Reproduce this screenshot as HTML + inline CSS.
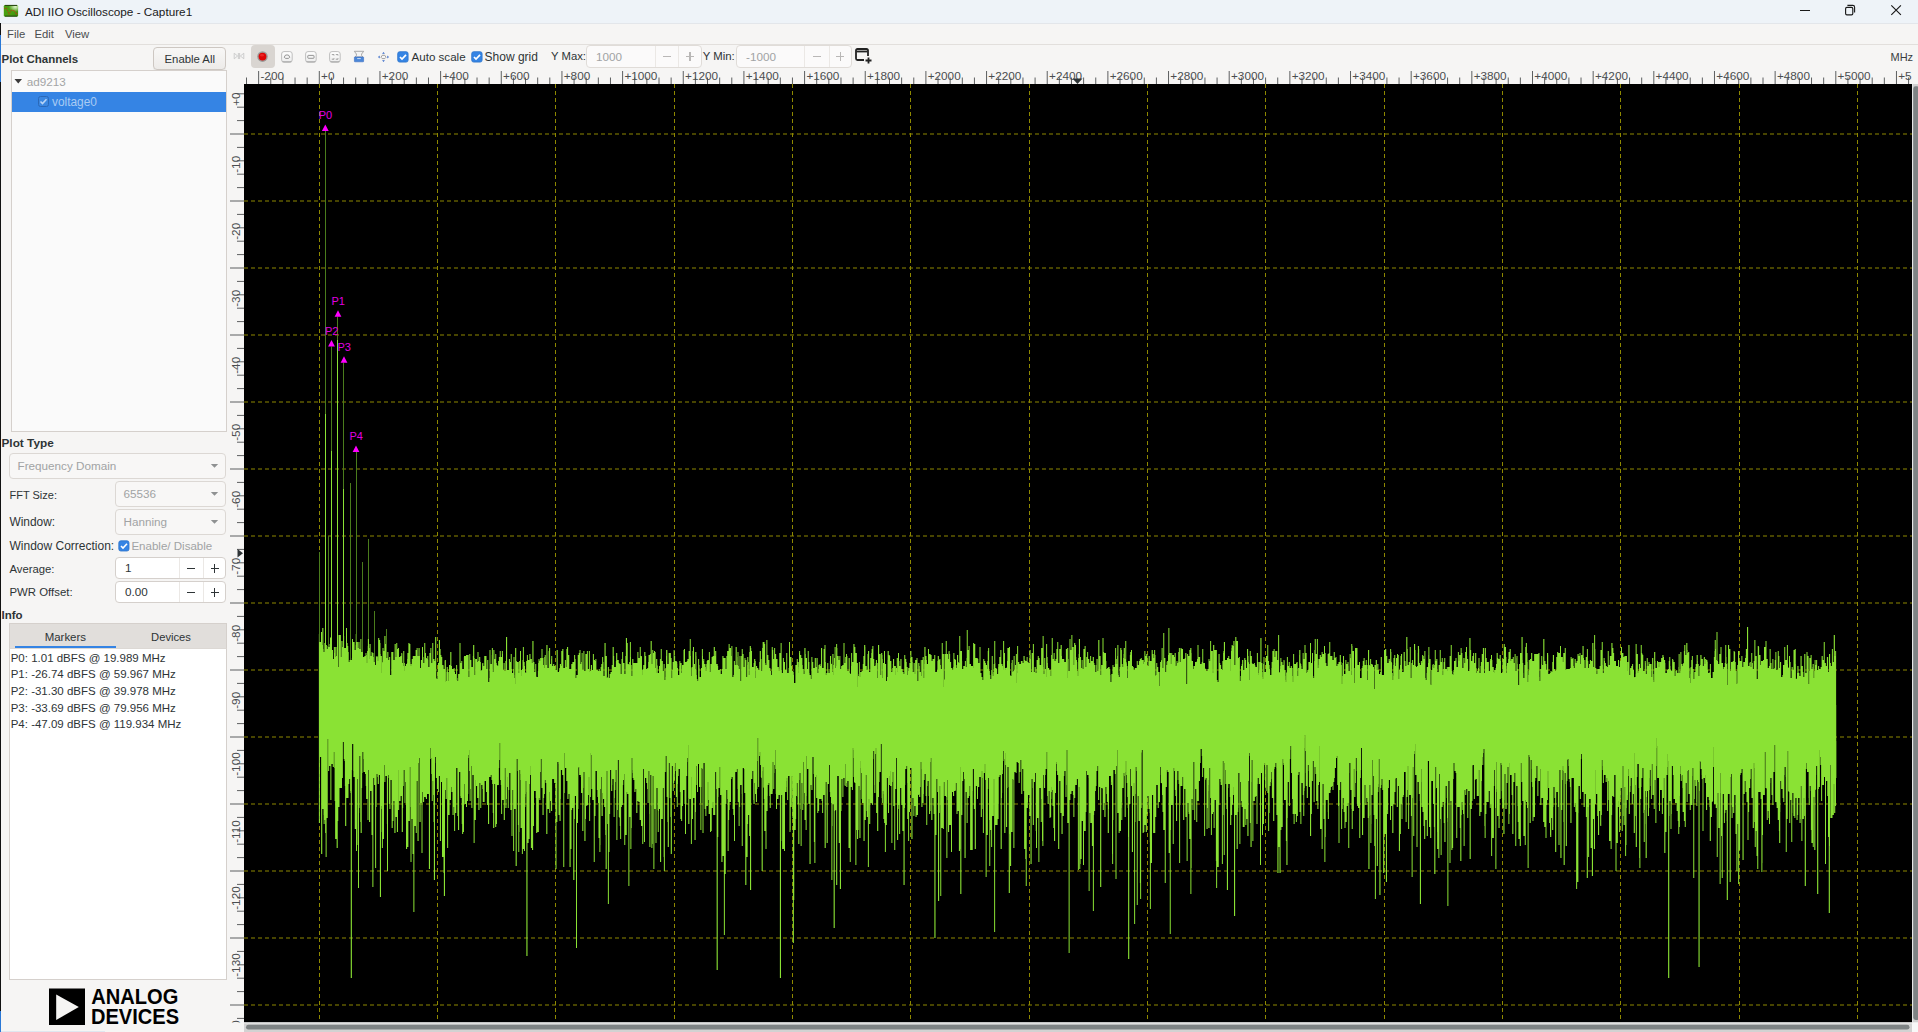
<!DOCTYPE html>
<html><head><meta charset="utf-8"><title>ADI IIO Oscilloscope - Capture1</title>
<style>
html,body{margin:0;padding:0;width:1918px;height:1032px;overflow:hidden;background:#f6f5f4}
body{position:relative;font-family:"Liberation Sans", sans-serif}
svg{display:block}
</style></head><body>
<div style="position:absolute;left:0px;top:0px;width:1918px;height:23px;background:#eef3f8"></div><div style="position:absolute;left:0px;top:23px;width:1918px;height:1px;background:#e3e6ea"></div><svg style="position:absolute;left:0;top:0" width="22" height="22" viewBox="0 0 22 22"><defs><linearGradient id="ig" x1="0" y1="0" x2="1" y2="1"><stop offset="0" stop-color="#4aa012"/><stop offset="0.6" stop-color="#48a010"/><stop offset="1" stop-color="#3a8a0c"/></linearGradient><radialGradient id="ih" cx="0.8" cy="0.15" r="0.45"><stop offset="0" stop-color="#eaf8d8" stop-opacity="0.95"/><stop offset="1" stop-color="#eaf8d8" stop-opacity="0"/></radialGradient></defs><rect x="3.8" y="5" width="14.3" height="11.6" rx="1.2" fill="url(#ig)"/><rect x="3.8" y="5" width="14.3" height="11.6" rx="1.2" fill="url(#ih)"/><rect x="5" y="4.9" width="12" height="1.1" fill="#2a4a12"/><rect x="5" y="15.6" width="12" height="1.1" fill="#2a4a12"/><path d="M4.3 8.5 L6.5 8.3 L7.6 10.6 L9 14 L11.5 10.2 L14.5 10.8 L16.3 14.3 L17.6 13.2" fill="none" stroke="#a84a10" stroke-width="1.1" stroke-dasharray="1.2 0.8"/></svg><div style="position:absolute;left:25px;top:6.05px;font-size:11.75px;line-height:11.75px;font-weight:400;color:#1a1a1a;white-space:pre;">ADI IIO Oscilloscope - Capture1</div><div style="position:absolute;left:1800px;top:9.8px;width:10px;height:1.2px;background:#1a1a1a"></div><svg style="position:absolute;left:1843px;top:3px" width="14" height="14" viewBox="0 0 14 14"><rect x="2.6" y="4.4" width="7.2" height="7.4" rx="1.3" fill="none" stroke="#1a1a1a" stroke-width="1.15"/><path d="M4.4 2.4 H9.8 Q11.6 2.4 11.6 4.2 V9.6" fill="none" stroke="#1a1a1a" stroke-width="1.1"/></svg><svg style="position:absolute;left:1889px;top:3px" width="14" height="14" viewBox="0 0 14 14"><path d="M2.3 2.3 L11.9 11.9 M11.9 2.3 L2.3 11.9" fill="none" stroke="#1a1a1a" stroke-width="1.15"/></svg><div style="position:absolute;left:0px;top:24px;width:1918px;height:1008px;background:#f6f5f4"></div><div style="position:absolute;left:0px;top:44px;width:1918px;height:1px;background:#e2dfdc"></div><div style="position:absolute;left:7px;top:29.43px;font-size:11.3px;line-height:11.3px;font-weight:400;color:#4a4d4f;white-space:pre;">File</div><div style="position:absolute;left:34.5px;top:29.43px;font-size:11.3px;line-height:11.3px;font-weight:400;color:#4a4d4f;white-space:pre;">Edit</div><div style="position:absolute;left:65px;top:29.43px;font-size:11.3px;line-height:11.3px;font-weight:400;color:#4a4d4f;white-space:pre;">View</div><div style="position:absolute;left:0px;top:23px;width:1px;height:1009px;background:#111"></div><div style="position:absolute;left:0px;top:35px;width:1px;height:47px;background:#2a78d6"></div><div style="position:absolute;left:0px;top:1011px;width:1px;height:21px;background:#2a78d6"></div><div style="position:absolute;left:1px;top:1031px;width:104px;height:1px;background:#dfe7f0"></div><div style="position:absolute;left:1.5px;top:53.77px;font-size:11.5px;line-height:11.5px;font-weight:700;color:#2e3436;white-space:pre;">Plot Channels</div><div style="position:absolute;left:153px;top:47px;width:73px;height:23px;box-sizing:border-box;border:1px solid #cdc7c2;border-radius:4px;background:linear-gradient(#f8f7f6,#edebe9);box-shadow:0 1px 0 rgba(0,0,0,0.05)"></div><div style="position:absolute;left:164.5px;top:53.89px;font-size:11.35px;line-height:11.35px;font-weight:400;color:#2e3436;white-space:pre;">Enable All</div><div style="position:absolute;left:11px;top:70px;width:216px;height:362px;box-sizing:border-box;border:1px solid #d5d0cc;background:#fafafa"></div><svg style="position:absolute;left:14px;top:78px" width="9" height="7" viewBox="0 0 9 7"><path d="M0.5 1 H8 L4.25 5.5 Z" fill="#3a3a3a"/></svg><div style="position:absolute;left:26.7px;top:76.30px;font-size:11.7px;line-height:11.7px;font-weight:400;color:#a3a5a6;white-space:pre;">ad9213</div><div style="position:absolute;left:12px;top:92px;width:214px;height:20px;background:#3584e4"></div><svg style="position:absolute;left:38px;top:96px" width="11" height="11" viewBox="0 0 11 11"><rect x="0.5" y="0.5" width="10" height="10" rx="2" fill="#3a86e0" stroke="#2a68b8" stroke-width="1"/><path d="M2.5 5.5 L4.5 7.5 L8.5 3.3" fill="none" stroke="#b8d4f6" stroke-width="1.6"/></svg><div style="position:absolute;left:52px;top:96.73px;font-size:11.9px;line-height:11.9px;font-weight:400;color:#a9cbf3;white-space:pre;">voltage0</div><div style="position:absolute;left:1.5px;top:438.01px;font-size:11.8px;line-height:11.8px;font-weight:700;color:#2e3436;white-space:pre;">Plot Type</div><div style="position:absolute;left:9px;top:453px;width:217px;height:26px;box-sizing:border-box;border:1px solid #dcd8d4;border-radius:4px;background:#f8f7f6"></div><div style="position:absolute;left:17.5px;top:460.40px;font-size:11.7px;line-height:11.7px;font-weight:400;color:#a1a3a4;white-space:pre;">Frequency Domain</div><svg style="position:absolute;left:210px;top:463.0px" width="9" height="6" viewBox="0 0 9 6"><path d="M0.8 1 H8.2 L4.5 4.8 Z" fill="#8f9192"/></svg><div style="position:absolute;left:9.5px;top:490.09px;font-size:11px;line-height:11px;font-weight:400;color:#2e3436;white-space:pre;">FFT Size:</div><div style="position:absolute;left:115px;top:481px;width:111px;height:26px;box-sizing:border-box;border:1px solid #dcd8d4;border-radius:4px;background:#f8f7f6"></div><div style="position:absolute;left:123.5px;top:488.40px;font-size:11.7px;line-height:11.7px;font-weight:400;color:#a1a3a4;white-space:pre;">65536</div><svg style="position:absolute;left:210px;top:491.0px" width="9" height="6" viewBox="0 0 9 6"><path d="M0.8 1 H8.2 L4.5 4.8 Z" fill="#8f9192"/></svg><div style="position:absolute;left:9.5px;top:516.93px;font-size:11.9px;line-height:11.9px;font-weight:400;color:#2e3436;white-space:pre;">Window:</div><div style="position:absolute;left:115px;top:509px;width:111px;height:26px;box-sizing:border-box;border:1px solid #dcd8d4;border-radius:4px;background:#f8f7f6"></div><div style="position:absolute;left:123.5px;top:516.40px;font-size:11.7px;line-height:11.7px;font-weight:400;color:#a1a3a4;white-space:pre;">Hanning</div><svg style="position:absolute;left:210px;top:519.0px" width="9" height="6" viewBox="0 0 9 6"><path d="M0.8 1 H8.2 L4.5 4.8 Z" fill="#8f9192"/></svg><div style="position:absolute;left:9.5px;top:540.14px;font-size:12px;line-height:12px;font-weight:400;color:#2e3436;white-space:pre;">Window Correction:</div><svg style="position:absolute;left:117.5px;top:539.5px" width="12" height="12" viewBox="0 0 12 12"><rect x="0.8" y="0.8" width="10.2" height="10.2" rx="2" fill="#3584e4" stroke="#2b73cc" stroke-width="0.8"/><path d="M3 6 L5 8 L9 3.8" fill="none" stroke="#fff" stroke-width="1.6"/></svg><div style="position:absolute;left:131.4px;top:540.52px;font-size:11.55px;line-height:11.55px;font-weight:400;color:#a1a3a4;white-space:pre;">Enable/ Disable</div><div style="position:absolute;left:9.5px;top:563.93px;font-size:11.3px;line-height:11.3px;font-weight:400;color:#2e3436;white-space:pre;">Average:</div><div style="position:absolute;left:115px;top:557px;width:111px;height:22px;box-sizing:border-box;border:1px solid #d5d0cc;border-radius:4px;background:#ffffff"></div><div style="position:absolute;left:179px;top:558px;width:1px;height:20px;background:#ebe8e5"></div><div style="position:absolute;left:203px;top:558px;width:1px;height:20px;background:#ebe8e5"></div><div style="position:absolute;left:125px;top:562.40px;font-size:11.7px;line-height:11.7px;font-weight:400;color:#2e3436;white-space:pre;">1</div><div style="position:absolute;left:187.0px;top:567.5px;width:8px;height:1.2px;background:#2e3436"></div><div style="position:absolute;left:210.5px;top:567.5px;width:8px;height:1.2px;background:#2e3436"></div><div style="position:absolute;left:213.9px;top:563.5px;width:1.2px;height:9px;background:#2e3436"></div><div style="position:absolute;left:9.5px;top:587.15px;font-size:11.4px;line-height:11.4px;font-weight:400;color:#2e3436;white-space:pre;">PWR Offset:</div><div style="position:absolute;left:115px;top:581px;width:111px;height:22px;box-sizing:border-box;border:1px solid #d5d0cc;border-radius:4px;background:#ffffff"></div><div style="position:absolute;left:179px;top:582px;width:1px;height:20px;background:#ebe8e5"></div><div style="position:absolute;left:203px;top:582px;width:1px;height:20px;background:#ebe8e5"></div><div style="position:absolute;left:125px;top:586.40px;font-size:11.7px;line-height:11.7px;font-weight:400;color:#2e3436;white-space:pre;">0.00</div><div style="position:absolute;left:187.0px;top:591.5px;width:8px;height:1.2px;background:#2e3436"></div><div style="position:absolute;left:210.5px;top:591.5px;width:8px;height:1.2px;background:#2e3436"></div><div style="position:absolute;left:213.9px;top:587.5px;width:1.2px;height:9px;background:#2e3436"></div><div style="position:absolute;left:1.5px;top:610.07px;font-size:11.5px;line-height:11.5px;font-weight:700;color:#2e3436;white-space:pre;">Info</div><div style="position:absolute;left:9px;top:623px;width:218px;height:26px;box-sizing:border-box;border:1px solid #d5d0cc;border-bottom:none;background:#e1dedb"></div><div style="position:absolute;left:44.7px;top:631.61px;font-size:11.45px;line-height:11.45px;font-weight:400;color:#2e3436;white-space:pre;">Markers</div><div style="position:absolute;left:151.1px;top:631.52px;font-size:11.2px;line-height:11.2px;font-weight:400;color:#2e3436;white-space:pre;">Devices</div><div style="position:absolute;left:15px;top:645.5px;width:101px;height:3px;background:#3584e4"></div><div style="position:absolute;left:9px;top:648px;width:218px;height:332px;box-sizing:border-box;border:1px solid #d5d0cc;border-top:1px solid #dcd8d4;background:#ffffff"></div><div style="position:absolute;left:10.7px;top:652.67px;font-size:11.5px;line-height:11.5px;font-weight:400;color:#2e3436;white-space:pre;">P0: 1.01 dBFS @ 19.989 MHz</div><div style="position:absolute;left:10.7px;top:669.47px;font-size:11.5px;line-height:11.5px;font-weight:400;color:#2e3436;white-space:pre;">P1: -26.74 dBFS @ 59.967 MHz</div><div style="position:absolute;left:10.7px;top:686.07px;font-size:11.5px;line-height:11.5px;font-weight:400;color:#2e3436;white-space:pre;">P2: -31.30 dBFS @ 39.978 MHz</div><div style="position:absolute;left:10.7px;top:702.77px;font-size:11.5px;line-height:11.5px;font-weight:400;color:#2e3436;white-space:pre;">P3: -33.69 dBFS @ 79.956 MHz</div><div style="position:absolute;left:10.7px;top:719.37px;font-size:11.5px;line-height:11.5px;font-weight:400;color:#2e3436;white-space:pre;">P4: -47.09 dBFS @ 119.934 MHz</div><svg style="position:absolute;left:49px;top:988px" width="132" height="38" viewBox="0 0 132 38"><rect x="0" y="0.5" width="36" height="36.5" fill="#000"/><path d="M7.2 6.4 L29.8 19 L7.2 32 Z" fill="#f6f5f4"/><text x="42.3" y="16.4" font-family="Liberation Sans" font-weight="700" font-size="22.2" textLength="87" lengthAdjust="spacingAndGlyphs" fill="#000">ANALOG</text><text x="42" y="36.3" font-family="Liberation Sans" font-weight="700" font-size="22.2" textLength="88" lengthAdjust="spacingAndGlyphs" fill="#000">DEVICES</text></svg><svg style="position:absolute;left:232px;top:50px" width="14" height="12" viewBox="0 0 14 12"><path d="M2.2 3.2 L5.6 6 L2.2 8.8 Z M11.8 3.2 L8.4 6 L11.8 8.8 Z" fill="#f4f4f4" stroke="#c8c8c8" stroke-width="0.9"/><path d="M6.4 3 V9 M7.6 3 V9" stroke="#c8c8c8" stroke-width="0.9"/></svg><div style="position:absolute;left:251px;top:45px;width:24px;height:22.5px;background:#d9d5d1;border-radius:4px"></div><svg style="position:absolute;left:256px;top:49.5px" width="13" height="13" viewBox="0 0 13 13"><circle cx="6.5" cy="6.6" r="5.3" fill="#9c9c9a"/><circle cx="6.5" cy="6.6" r="3.9" fill="#dd0606"/><ellipse cx="6" cy="5.2" rx="2" ry="1.3" fill="#ff5050" opacity="0.45"/></svg><svg style="position:absolute;left:281px;top:50.5px" width="12" height="12" viewBox="0 0 12 12"><defs><linearGradient id="rb" x1="0" y1="0" x2="0" y2="1"><stop offset="0" stop-color="#ffffff"/><stop offset="1" stop-color="#ececec"/></linearGradient></defs><rect x="0.6" y="0.6" width="10.6" height="10.6" rx="2.4" fill="url(#rb)" stroke="#b8b8b8" stroke-width="0.9"/><path d="M1.5 10.8 H10.3" stroke="#9a9a9a" stroke-width="0.8"/><path d="M3.2 6.2 L4.6 4 H7.4 L8.8 6.2 L7.4 7.4 H4.6 Z" fill="none" stroke="#8a8a8a" stroke-width="0.9"/></svg><svg style="position:absolute;left:305px;top:50.5px" width="12" height="12" viewBox="0 0 12 12"><defs><linearGradient id="rb" x1="0" y1="0" x2="0" y2="1"><stop offset="0" stop-color="#ffffff"/><stop offset="1" stop-color="#ececec"/></linearGradient></defs><rect x="0.6" y="0.6" width="10.6" height="10.6" rx="2.4" fill="url(#rb)" stroke="#b8b8b8" stroke-width="0.9"/><path d="M1.5 10.8 H10.3" stroke="#9a9a9a" stroke-width="0.8"/><rect x="2.8" y="4.4" width="6.2" height="2.9" rx="0.6" fill="none" stroke="#8a8a8a" stroke-width="0.9"/></svg><svg style="position:absolute;left:329px;top:50.5px" width="12" height="12" viewBox="0 0 12 12"><defs><linearGradient id="rb" x1="0" y1="0" x2="0" y2="1"><stop offset="0" stop-color="#ffffff"/><stop offset="1" stop-color="#ececec"/></linearGradient></defs><rect x="0.6" y="0.6" width="10.6" height="10.6" rx="2.4" fill="url(#rb)" stroke="#b8b8b8" stroke-width="0.9"/><path d="M1.5 10.8 H10.3" stroke="#9a9a9a" stroke-width="0.8"/><path d="M2.8 3.6 h2.2 v0.9 M6.8 3.6 h2.2 v0.9 M2.8 8.2 h2.2 v-0.9 M6.8 8.2 h2.2 v-0.9" fill="none" stroke="#8a8a8a" stroke-width="0.8"/></svg><svg style="position:absolute;left:353px;top:50px" width="12" height="13" viewBox="0 0 12 13"><path d="M1.3 1.3 H10.7 L8.6 4 V5.5 L10 7 H2 L3.4 5.5 V4 Z" fill="#f4f4f4" stroke="#a0a0a0" stroke-width="0.9"/><rect x="1.4" y="7" width="9.2" height="4.8" rx="0.5" fill="#4a86d8" stroke="#3a6cc0" stroke-width="0.6"/><path d="M4.2 8.6 h3.6" stroke="#d8e6f8" stroke-width="0.9"/></svg><svg style="position:absolute;left:376.5px;top:50.5px" width="13" height="12" viewBox="0 0 13 12"><path d="M6.5 1 L7.9 2.7 H5.1 Z M6.5 11 L5.1 9.3 H7.9 Z M1 6 L2.7 4.6 V7.4 Z M12 6 L10.3 7.4 V4.6 Z" fill="#3a6cc8"/><path d="M4 6.3 L5.2 4.3 H7.8 L9 6.3 L7.8 7.6 H5.2 Z" fill="#f6f6f6" stroke="#8a8a8a" stroke-width="0.8"/></svg><svg style="position:absolute;left:397px;top:50.6px" width="12" height="12" viewBox="0 0 12 12"><rect x="0.7" y="0.7" width="10.4" height="10.4" rx="2" fill="#3584e4" stroke="#2b73cc" stroke-width="0.8"/><path d="M3 6 L5 8 L9 3.8" fill="none" stroke="#fff" stroke-width="1.7"/></svg><div style="position:absolute;left:411.5px;top:50.98px;font-size:11.6px;line-height:11.6px;font-weight:400;color:#2e3436;white-space:pre;">Auto scale</div><svg style="position:absolute;left:470.5px;top:50.6px" width="12" height="12" viewBox="0 0 12 12"><rect x="0.7" y="0.7" width="10.4" height="10.4" rx="2" fill="#3584e4" stroke="#2b73cc" stroke-width="0.8"/><path d="M3 6 L5 8 L9 3.8" fill="none" stroke="#fff" stroke-width="1.7"/></svg><div style="position:absolute;left:484.6px;top:50.64px;font-size:12px;line-height:12px;font-weight:400;color:#2e3436;white-space:pre;">Show grid</div><div style="position:absolute;left:551px;top:51.23px;font-size:11.3px;line-height:11.3px;font-weight:400;color:#2e3436;white-space:pre;">Y Max:</div><div style="position:absolute;left:586px;top:45px;width:116px;height:22.5px;box-sizing:border-box;border:1px solid #e0dcd8;border-radius:4px;background:#fbfafa"></div><div style="position:absolute;left:655px;top:46px;width:1px;height:20.5px;background:#ebe8e5"></div><div style="position:absolute;left:678px;top:46px;width:1px;height:20.5px;background:#ebe8e5"></div><div style="position:absolute;left:596px;top:50.65px;font-size:11.7px;line-height:11.7px;font-weight:400;color:#a1a3a4;white-space:pre;">1000</div><div style="position:absolute;left:662.5px;top:55.75px;width:8px;height:1.2px;background:#b9b7b6"></div><div style="position:absolute;left:686.0px;top:55.75px;width:8px;height:1.2px;background:#b9b7b6"></div><div style="position:absolute;left:689.4px;top:51.75px;width:1.2px;height:9px;background:#b9b7b6"></div><div style="position:absolute;left:702.7px;top:51.15px;font-size:11.4px;line-height:11.4px;font-weight:400;color:#2e3436;white-space:pre;">Y Min:</div><div style="position:absolute;left:736px;top:45px;width:115.5px;height:22.5px;box-sizing:border-box;border:1px solid #e0dcd8;border-radius:4px;background:#fbfafa"></div><div style="position:absolute;left:804px;top:46px;width:1px;height:20.5px;background:#ebe8e5"></div><div style="position:absolute;left:829px;top:46px;width:1px;height:20.5px;background:#ebe8e5"></div><div style="position:absolute;left:746px;top:50.65px;font-size:11.7px;line-height:11.7px;font-weight:400;color:#a1a3a4;white-space:pre;">-1000</div><div style="position:absolute;left:812.5px;top:55.75px;width:8px;height:1.2px;background:#b9b7b6"></div><div style="position:absolute;left:836.25px;top:55.75px;width:8px;height:1.2px;background:#b9b7b6"></div><div style="position:absolute;left:839.65px;top:51.75px;width:1.2px;height:9px;background:#b9b7b6"></div><svg style="position:absolute;left:855px;top:47px" width="18" height="18" viewBox="0 0 18 18"><path d="M13 9 V3.5 Q13 2 11.5 2 H2.5 Q1 2 1 3.5 V11.5 Q1 13 2.5 13 H9" fill="none" stroke="#222" stroke-width="1.8"/><path d="M1.5 4.5 H12.5" stroke="#222" stroke-width="1.8"/><path d="M13.5 10.5 V16.5 M10.5 13.5 H16.5" stroke="#222" stroke-width="1.8"/></svg><div style="position:absolute;left:1890.5px;top:51.69px;font-size:11px;line-height:11px;font-weight:400;color:#3a3d3f;white-space:pre;">MHz</div><svg style="position:absolute;left:0;top:0" width="1918" height="1032" viewBox="0 0 1918 1032"><defs><clipPath id="rtop"><rect x="244" y="60" width="1668" height="25"/></clipPath><clipPath id="rleft"><rect x="224" y="84" width="20" height="938.5"/></clipPath><clipPath id="plot"><rect x="244" y="84" width="1668" height="938.5"/></clipPath></defs><g clip-path="url(#rtop)"><path d="M197.98 71V84 M210.11 77.5V84 M222.24 77.5V84 M234.38 77.5V84 M246.51 77.5V84 M258.64 71V84 M270.77 77.5V84 M282.90 77.5V84 M295.04 77.5V84 M307.17 77.5V84 M319.30 71V84 M331.43 77.5V84 M343.56 77.5V84 M355.70 77.5V84 M367.83 77.5V84 M379.96 71V84 M392.09 77.5V84 M404.22 77.5V84 M416.36 77.5V84 M428.49 77.5V84 M440.62 71V84 M452.75 77.5V84 M464.88 77.5V84 M477.02 77.5V84 M489.15 77.5V84 M501.28 71V84 M513.41 77.5V84 M525.54 77.5V84 M537.68 77.5V84 M549.81 77.5V84 M561.94 71V84 M574.07 77.5V84 M586.20 77.5V84 M598.34 77.5V84 M610.47 77.5V84 M622.60 71V84 M634.73 77.5V84 M646.86 77.5V84 M659.00 77.5V84 M671.13 77.5V84 M683.26 71V84 M695.39 77.5V84 M707.52 77.5V84 M719.66 77.5V84 M731.79 77.5V84 M743.92 71V84 M756.05 77.5V84 M768.18 77.5V84 M780.32 77.5V84 M792.45 77.5V84 M804.58 71V84 M816.71 77.5V84 M828.84 77.5V84 M840.98 77.5V84 M853.11 77.5V84 M865.24 71V84 M877.37 77.5V84 M889.50 77.5V84 M901.64 77.5V84 M913.77 77.5V84 M925.90 71V84 M938.03 77.5V84 M950.16 77.5V84 M962.30 77.5V84 M974.43 77.5V84 M986.56 71V84 M998.69 77.5V84 M1010.82 77.5V84 M1022.96 77.5V84 M1035.09 77.5V84 M1047.22 71V84 M1059.35 77.5V84 M1071.48 77.5V84 M1083.62 77.5V84 M1095.75 77.5V84 M1107.88 71V84 M1120.01 77.5V84 M1132.14 77.5V84 M1144.28 77.5V84 M1156.41 77.5V84 M1168.54 71V84 M1180.67 77.5V84 M1192.80 77.5V84 M1204.94 77.5V84 M1217.07 77.5V84 M1229.20 71V84 M1241.33 77.5V84 M1253.46 77.5V84 M1265.60 77.5V84 M1277.73 77.5V84 M1289.86 71V84 M1301.99 77.5V84 M1314.12 77.5V84 M1326.26 77.5V84 M1338.39 77.5V84 M1350.52 71V84 M1362.65 77.5V84 M1374.78 77.5V84 M1386.92 77.5V84 M1399.05 77.5V84 M1411.18 71V84 M1423.31 77.5V84 M1435.44 77.5V84 M1447.58 77.5V84 M1459.71 77.5V84 M1471.84 71V84 M1483.97 77.5V84 M1496.10 77.5V84 M1508.24 77.5V84 M1520.37 77.5V84 M1532.50 71V84 M1544.63 77.5V84 M1556.76 77.5V84 M1568.90 77.5V84 M1581.03 77.5V84 M1593.16 71V84 M1605.29 77.5V84 M1617.42 77.5V84 M1629.56 77.5V84 M1641.69 77.5V84 M1653.82 71V84 M1665.95 77.5V84 M1678.08 77.5V84 M1690.22 77.5V84 M1702.35 77.5V84 M1714.48 71V84 M1726.61 77.5V84 M1738.74 77.5V84 M1750.88 77.5V84 M1763.01 77.5V84 M1775.14 71V84 M1787.27 77.5V84 M1799.40 77.5V84 M1811.54 77.5V84 M1823.67 77.5V84 M1835.80 71V84 M1847.93 77.5V84 M1860.06 77.5V84 M1872.20 77.5V84 M1884.33 77.5V84 M1896.46 71V84 M1908.59 77.5V84 M1920.72 77.5V84 M1932.86 77.5V84 M1944.99 77.5V84 M1957.12 71V84 M1969.25 77.5V84 M1981.38 77.5V84 M1993.52 77.5V84 M2005.65 77.5V84" stroke="#5d5f60" stroke-width="1" fill="none"/><g font-family="Liberation Sans" font-size="11.75" fill="#4a4d4f"><text x="199.78" y="80.3">-400</text><text x="260.44" y="80.3">-200</text><text x="321.10" y="80.3">+0</text><text x="381.76" y="80.3">+200</text><text x="442.42" y="80.3">+400</text><text x="503.08" y="80.3">+600</text><text x="563.74" y="80.3">+800</text><text x="624.40" y="80.3">+1000</text><text x="685.06" y="80.3">+1200</text><text x="745.72" y="80.3">+1400</text><text x="806.38" y="80.3">+1600</text><text x="867.04" y="80.3">+1800</text><text x="927.70" y="80.3">+2000</text><text x="988.36" y="80.3">+2200</text><text x="1049.02" y="80.3">+2400</text><text x="1109.68" y="80.3">+2600</text><text x="1170.34" y="80.3">+2800</text><text x="1231.00" y="80.3">+3000</text><text x="1291.66" y="80.3">+3200</text><text x="1352.32" y="80.3">+3400</text><text x="1412.98" y="80.3">+3600</text><text x="1473.64" y="80.3">+3800</text><text x="1534.30" y="80.3">+4000</text><text x="1594.96" y="80.3">+4200</text><text x="1655.62" y="80.3">+4400</text><text x="1716.28" y="80.3">+4600</text><text x="1776.94" y="80.3">+4800</text><text x="1837.60" y="80.3">+5000</text><text x="1898.26" y="80.3">+5200</text><text x="1958.92" y="80.3">+5400</text></g><path d="M1072.5 78.5 H1082.5 L1077.5 84 Z" fill="#2e3436"/></g><g clip-path="url(#rleft)"><path d="M230 67.00H244 M237 80.40H244 M237 93.80H244 M237 107.20H244 M237 120.60H244 M230 134.00H244 M237 147.40H244 M237 160.80H244 M237 174.20H244 M237 187.60H244 M230 201.00H244 M237 214.40H244 M237 227.80H244 M237 241.20H244 M237 254.60H244 M230 268.00H244 M237 281.40H244 M237 294.80H244 M237 308.20H244 M237 321.60H244 M230 335.00H244 M237 348.40H244 M237 361.80H244 M237 375.20H244 M237 388.60H244 M230 402.00H244 M237 415.40H244 M237 428.80H244 M237 442.20H244 M237 455.60H244 M230 469.00H244 M237 482.40H244 M237 495.80H244 M237 509.20H244 M237 522.60H244 M230 536.00H244 M237 549.40H244 M237 562.80H244 M237 576.20H244 M237 589.60H244 M230 603.00H244 M237 616.40H244 M237 629.80H244 M237 643.20H244 M237 656.60H244 M230 670.00H244 M237 683.40H244 M237 696.80H244 M237 710.20H244 M237 723.60H244 M230 737.00H244 M237 750.40H244 M237 763.80H244 M237 777.20H244 M237 790.60H244 M230 804.00H244 M237 817.40H244 M237 830.80H244 M237 844.20H244 M237 857.60H244 M230 871.00H244 M237 884.40H244 M237 897.80H244 M237 911.20H244 M237 924.60H244 M230 938.00H244 M237 951.40H244 M237 964.80H244 M237 978.20H244 M237 991.60H244 M230 1005.00H244 M237 1018.40H244 M237 1031.80H244 M237 1045.20H244 M237 1058.60H244 M230 1072.00H244 M237 1085.40H244 M237 1098.80H244 M237 1112.20H244 M237 1125.60H244 M230 1139.00H244 M237 1152.40H244 M237 1165.80H244 M237 1179.20H244 M237 1192.60H244" stroke="#5d5f60" stroke-width="1" fill="none"/><g font-family="Liberation Sans" font-size="11.75" fill="#4a4d4f"><text transform="translate(240.3 38.80) rotate(-90)">+10</text><text transform="translate(240.3 105.80) rotate(-90)">+0</text><text transform="translate(240.3 172.80) rotate(-90)">-10</text><text transform="translate(240.3 239.80) rotate(-90)">-20</text><text transform="translate(240.3 306.80) rotate(-90)">-30</text><text transform="translate(240.3 373.80) rotate(-90)">-40</text><text transform="translate(240.3 440.80) rotate(-90)">-50</text><text transform="translate(240.3 507.80) rotate(-90)">-60</text><text transform="translate(240.3 574.80) rotate(-90)">-70</text><text transform="translate(240.3 641.80) rotate(-90)">-80</text><text transform="translate(240.3 708.80) rotate(-90)">-90</text><text transform="translate(240.3 775.80) rotate(-90)">-100</text><text transform="translate(240.3 842.80) rotate(-90)">-110</text><text transform="translate(240.3 909.80) rotate(-90)">-120</text><text transform="translate(240.3 976.80) rotate(-90)">-130</text><text transform="translate(240.3 1043.80) rotate(-90)">-140</text><text transform="translate(240.3 1110.80) rotate(-90)">-150</text></g><path d="M237.5 549 L243 553.2 L237.5 557.5 Z" fill="#2e3436"/></g><rect x="244" y="84" width="1668" height="938.5" fill="#000"/><g clip-path="url(#plot)"><path d="M319.5 84V1022.5 M437.5 84V1022.5 M555.5 84V1022.5 M674.5 84V1022.5 M792.5 84V1022.5 M910.5 84V1022.5 M1029.5 84V1022.5 M1147.5 84V1022.5 M1265.5 84V1022.5 M1384.5 84V1022.5 M1502.5 84V1022.5 M1620.5 84V1022.5 M1739.5 84V1022.5 M1857.5 84V1022.5" stroke="#8e8800" stroke-width="1" stroke-dasharray="4 3" fill="none"/><path d="M244 134.0H1912 M244 201.0H1912 M244 268.0H1912 M244 335.0H1912 M244 402.0H1912 M244 469.0H1912 M244 536.0H1912 M244 603.0H1912 M244 670.0H1912 M244 737.0H1912 M244 804.0H1912 M244 871.0H1912 M244 938.0H1912 M244 1005.0H1912" stroke="#8e8800" stroke-width="1" stroke-dasharray="4 3" fill="none"/><path d="M318.5 634V823M329.5 766V771M333.5 647V659M344.5 636V648M344.5 761V786M351.5 658V660M352.5 744V770M359.5 808V813M362.5 773V788M367.5 639V646M370.5 791V822M375.5 656V665M376.5 807V868M379.5 775V897M380.5 640V643M381.5 832V848M386.5 776V824M388.5 778V804M390.5 657V675M396.5 817V832M399.5 801V810M403.5 786V808M405.5 664V666M406.5 663V664M407.5 847V849M420.5 660V668M424.5 797V802M425.5 798V799M428.5 794V869M433.5 822V880M435.5 763V778M436.5 778V789M437.5 789V792M438.5 640V663M439.5 776V841M443.5 873V896M448.5 815V848M455.5 813V831M457.5 665V678M459.5 772V830M463.5 657V669M463.5 832V834M472.5 656V667M486.5 792V805M489.5 777V824M491.5 648V655M497.5 785V786M498.5 657V661M501.5 651V657M502.5 800V814M507.5 637V670M508.5 659V670M514.5 809V851M517.5 771V825M521.5 828V854M522.5 647V660M526.5 655V661M530.5 775V848M533.5 826V850M537.5 671V677M544.5 794V798M550.5 648V664M552.5 779V811M559.5 664V668M564.5 660V668M568.5 647V655M572.5 808V810M575.5 655V659M586.5 651V654M588.5 651V669M588.5 795V805M590.5 665V671M590.5 797V821M592.5 654V670M596.5 771V790M603.5 657V662M607.5 667V677M607.5 824V904M610.5 770V814M614.5 656V667M615.5 661V667M621.5 807V839M623.5 652V663M625.5 638V656M629.5 642V662M646.5 656V669M649.5 654V655M659.5 659V666M661.5 819V862M663.5 857V871M675.5 656V661M675.5 771V797M679.5 769V792M682.5 806V821M690.5 799V844M699.5 659V665M701.5 649V668M708.5 652V660M718.5 666V670M721.5 669V674M723.5 856V935M729.5 810V820M733.5 661V675M740.5 785V807M743.5 768V769M748.5 815V824M751.5 779V890M755.5 794V802M757.5 666V668M759.5 756V787M760.5 765V777M763.5 788V799M765.5 644V663M775.5 648V654M776.5 654V659M779.5 795V978M782.5 658V673M785.5 669V670M788.5 776V800M792.5 818V943M796.5 796V819M800.5 651V655M813.5 774V842M819.5 799V811M822.5 648V668M823.5 795V813M829.5 661V669M831.5 656V663M837.5 644V648M839.5 843V889M851.5 787V790M852.5 653V662M858.5 662V674M858.5 830V839M867.5 817V867M869.5 651V672M873.5 759V805M875.5 660V663M879.5 645V654M881.5 798V803M884.5 823V852M886.5 664V681M887.5 778V804M890.5 656V661M892.5 664V668M894.5 659V666M898.5 809V840M900.5 788V834M909.5 812V841M910.5 768V801M930.5 811V814M936.5 671V672M939.5 813V901M942.5 828V829M949.5 825V832M950.5 654V662M951.5 662V668M954.5 791V796M958.5 655V662M958.5 811V851M962.5 661V669M964.5 661V666M973.5 769V809M974.5 643V644M982.5 809V833M989.5 648V671M992.5 816V847M995.5 825V932M997.5 669V674M1002.5 774V793M1004.5 641V653M1007.5 788V827M1011.5 832V866M1015.5 654V665M1018.5 646V662M1020.5 661V664M1032.5 644V653M1045.5 775V788M1047.5 644V657M1049.5 668V670M1051.5 799V817M1055.5 793V841M1065.5 649V662M1072.5 791V795M1077.5 779V870M1078.5 639V654M1088.5 652V659M1091.5 656V661M1091.5 823V846M1092.5 846V911M1094.5 811V815M1095.5 791V811M1099.5 787V800M1104.5 652V653M1106.5 794V802M1110.5 776V785M1113.5 820V864M1114.5 664V667M1114.5 770V774M1116.5 648V659M1129.5 655V661M1131.5 786V852M1135.5 822V924M1138.5 661V665M1139.5 821V883M1141.5 808V899M1149.5 842V909M1155.5 650V655M1161.5 783V784M1166.5 661V662M1174.5 771V790M1177.5 780V821M1178.5 648V652M1180.5 805V863M1188.5 654V656M1200.5 657V664M1203.5 768V777M1205.5 780V836M1210.5 798V835M1211.5 641V651M1215.5 800V861M1217.5 867V888M1221.5 665V669M1221.5 785V864M1223.5 642V651M1226.5 809V890M1232.5 805V815M1235.5 815V916M1238.5 657V658M1246.5 660V668M1248.5 649V656M1249.5 756V823M1253.5 663V664M1256.5 653V667M1265.5 665V672M1269.5 813V831M1270.5 670V675M1271.5 783V798M1279.5 635V672M1285.5 800V841M1286.5 657V672M1288.5 782V806M1294.5 654V664M1295.5 814V822M1308.5 771V787M1311.5 814V836M1316.5 639V654M1327.5 812V819M1342.5 809V829M1356.5 771V804M1361.5 748V770M1363.5 818V835M1369.5 650V665M1371.5 659V664M1374.5 846V899M1385.5 834V882M1388.5 788V814M1391.5 649V652M1392.5 663V673M1398.5 786V851M1399.5 668V670M1402.5 654V672M1409.5 795V829M1410.5 795V816M1413.5 660V665M1415.5 644V650M1416.5 666V667M1417.5 646V653M1419.5 649V663M1419.5 801V904M1420.5 661V665M1423.5 655V656M1433.5 804V827M1453.5 779V848M1457.5 652V667M1467.5 656V659M1468.5 659V671M1471.5 650V661M1473.5 765V799M1474.5 653V663M1480.5 662V666M1482.5 648V654M1489.5 661V671M1492.5 838V856M1501.5 791V798M1525.5 643V647M1547.5 800V805M1548.5 653V655M1552.5 655V662M1557.5 792V807M1569.5 668V669M1569.5 782V787M1573.5 778V807M1577.5 882V889M1579.5 786V799M1585.5 794V817M1586.5 649V657M1589.5 660V664M1589.5 799V857M1591.5 848V876M1593.5 819V849M1595.5 635V649M1599.5 811V835M1602.5 770V783M1608.5 800V811M1609.5 656V660M1612.5 796V815M1614.5 653V661M1619.5 661V667M1620.5 816V832M1626.5 845V856M1633.5 664V670M1638.5 664V671M1641.5 787V799M1647.5 791V816M1650.5 786V799M1656.5 663V668M1661.5 790V814M1665.5 660V663M1666.5 670V673M1667.5 669V670M1672.5 766V775M1673.5 659V660M1683.5 651V663M1683.5 812V821M1691.5 656V660M1703.5 657V658M1704.5 778V783M1707.5 797V810M1708.5 670V673M1709.5 664V672M1713.5 657V672M1713.5 767V801M1718.5 662V664M1723.5 794V823M1729.5 645V649M1735.5 652V662M1739.5 651V661M1739.5 850V884M1740.5 775V850M1745.5 649V655M1748.5 627V666M1749.5 788V812M1759.5 647V655M1768.5 666V668M1778.5 820V831M1781.5 662V677M1786.5 645V660M1798.5 798V815M1810.5 791V830M1816.5 775V789M1817.5 660V670M1819.5 666V669M1822.5 785V801M1826.5 657V666M1828.5 657V671M1830.5 654V663M1831.5 649V666M1836.5 651V705" stroke="#8ae234" stroke-opacity="0.125" stroke-width="1" fill="none"/><path d="M322.5 809V854M332.5 764V767M338.5 807V821M343.5 742V759M346.5 798V826M348.5 646V652M349.5 779V784M350.5 793V978M354.5 777V829M355.5 634V645M365.5 774V786M367.5 646V651M377.5 777V784M379.5 638V640M397.5 643V649M401.5 796V832M402.5 653V654M404.5 651V663M411.5 659V664M412.5 656V659M415.5 826V833M425.5 643V653M425.5 797V798M428.5 656V660M431.5 774V801M433.5 643V659M435.5 757V763M436.5 637V678M437.5 669V672M442.5 657V665M444.5 660V661M446.5 667V670M456.5 768V813M461.5 798V824M462.5 661V669M468.5 758V794M470.5 654V660M474.5 645V658M480.5 657V662M481.5 785V808M482.5 789V802M488.5 660V682M491.5 655V664M492.5 784V813M494.5 784V828M496.5 654V663M496.5 824V827M499.5 651V657M499.5 760V768M500.5 780V785M503.5 800V820M507.5 787V808M509.5 773V790M510.5 654V662M516.5 648V661M519.5 832V852M535.5 791V798M536.5 664V676M537.5 832V833M544.5 655V657M550.5 801V813M552.5 656V666M554.5 664V666M564.5 793V867M569.5 655V669M577.5 655V675M578.5 653V655M580.5 775V777M587.5 805V806M593.5 800V862M598.5 669V671M611.5 665V672M612.5 785V791M617.5 653V660M618.5 760V817M619.5 818V826M623.5 780V785M625.5 835V845M639.5 647V658M643.5 769V844M653.5 650V653M657.5 659V665M657.5 810V832M660.5 649V659M667.5 822V847M670.5 817V854M672.5 766V791M674.5 780V783M676.5 797V807M677.5 662V664M686.5 661V662M687.5 762V776M689.5 639V651M704.5 659V664M706.5 661V664M713.5 647V656M715.5 772V815M716.5 651V664M718.5 797V837M719.5 669V670M735.5 772V802M737.5 789V802M741.5 649V656M741.5 794V846M748.5 657V662M749.5 646V652M751.5 648V651M755.5 659V661M758.5 668V670M759.5 651V662M769.5 796V808M771.5 647V675M773.5 650V659M774.5 773V789M775.5 769V794M781.5 795V841M787.5 653V673M793.5 671V672M794.5 830V900M796.5 659V665M801.5 655V658M803.5 804V810M807.5 651V669M813.5 662V668M814.5 658V668M818.5 811V813M828.5 663V671M829.5 765V792M831.5 663V664M835.5 810V811M837.5 776V885M838.5 776V843M844.5 785V786M849.5 848V862M850.5 673V674M862.5 664V671M865.5 645V647M866.5 811V817M870.5 803V824M871.5 803V804M874.5 659V666M878.5 797V831M882.5 653V655M895.5 789V850M896.5 658V668M896.5 758V789M905.5 655V659M905.5 769V785M906.5 659V662M920.5 660V672M920.5 787V797M927.5 786V825M935.5 655V672M937.5 656V661M941.5 643V669M941.5 828V896M945.5 641V654M960.5 636V651M963.5 772V781M966.5 630V658M974.5 809V849M975.5 644V658M978.5 659V663M979.5 777V787M980.5 777V817M984.5 659V661M985.5 661V663M987.5 651V661M988.5 778V789M990.5 830V866M991.5 656V670M995.5 641V663M1006.5 667V668M1008.5 787V893M1011.5 660V663M1017.5 762V763M1019.5 662V664M1022.5 769V794M1025.5 660V661M1025.5 859V886M1032.5 788V825M1035.5 773V831M1037.5 656V660M1040.5 788V822M1045.5 658V669M1051.5 638V655M1058.5 642V663M1059.5 781V849M1064.5 659V662M1068.5 648V659M1075.5 643V645M1075.5 785V798M1076.5 657V660M1077.5 662V671M1080.5 864V869M1089.5 659V663M1092.5 657V661M1101.5 788V887M1102.5 789V810M1107.5 802V833M1110.5 669V675M1122.5 788V820M1123.5 648V654M1126.5 641V662M1127.5 797V808M1129.5 804V959M1134.5 668V670M1136.5 661V668M1136.5 771V905M1139.5 659V661M1140.5 658V659M1145.5 825V832M1149.5 813V842M1155.5 817V833M1156.5 785V817M1157.5 663V667M1157.5 785V808M1158.5 667V672M1160.5 775V783M1164.5 633V658M1164.5 830V883M1169.5 853V934M1172.5 653V655M1172.5 805V844M1184.5 658V659M1184.5 789V820M1195.5 789V820M1196.5 661V662M1197.5 801V822M1201.5 662V663M1201.5 749V756M1203.5 649V663M1205.5 668V669M1206.5 669V671M1214.5 645V650M1220.5 663V665M1223.5 815V855M1228.5 784V788M1229.5 656V659M1229.5 784V797M1231.5 815V825M1238.5 808V812M1241.5 664V666M1242.5 807V827M1243.5 660V670M1249.5 651V664M1255.5 665V666M1258.5 778V784M1264.5 765V780M1268.5 645V661M1271.5 779V783M1274.5 769V821M1277.5 651V660M1288.5 662V666M1290.5 666V668M1301.5 664V666M1302.5 783V795M1304.5 791V816M1305.5 773V786M1306.5 786V798M1314.5 639V650M1319.5 655V659M1327.5 800V812M1330.5 642V656M1333.5 652V660M1334.5 778V782M1339.5 655V662M1340.5 782V790M1349.5 773V848M1351.5 809V829M1352.5 644V646M1360.5 778V838M1362.5 661V666M1365.5 660V665M1367.5 802V818M1375.5 660V665M1376.5 819V866M1380.5 657V672M1381.5 785V788M1384.5 834V873M1386.5 649V656M1387.5 656V663M1395.5 655V663M1396.5 778V807M1408.5 662V665M1409.5 647V662M1414.5 754V836M1417.5 653V666M1418.5 782V794M1419.5 794V801M1425.5 820V839M1426.5 667V673M1426.5 820V836M1431.5 781V838M1432.5 664V665M1434.5 650V665M1439.5 650V665M1441.5 658V662M1443.5 802V823M1445.5 658V669M1446.5 667V669M1446.5 786V798M1450.5 645V656M1452.5 671V674M1457.5 807V838M1459.5 807V828M1466.5 789V795M1468.5 791V818M1476.5 653V668M1476.5 779V796M1481.5 654V662M1483.5 753V765M1484.5 648V673M1489.5 791V808M1498.5 658V659M1503.5 644V659M1512.5 657V659M1516.5 786V846M1517.5 806V822M1518.5 669V685M1519.5 839V846M1523.5 663V673M1524.5 836V845M1528.5 660V671M1532.5 653V661M1535.5 778V781M1542.5 656V665M1548.5 655V674M1549.5 673V674M1551.5 818V837M1553.5 807V830M1556.5 792V852M1558.5 652V653M1562.5 780V810M1564.5 648V653M1565.5 784V846M1568.5 766V779M1581.5 754V759M1585.5 657V660M1586.5 817V878M1588.5 661V668M1596.5 668V669M1601.5 642V650M1601.5 815V826M1607.5 651V667M1609.5 660V665M1614.5 775V797M1620.5 660V661M1620.5 799V816M1621.5 788V831M1628.5 776V814M1631.5 778V804M1633.5 794V833M1635.5 816V847M1638.5 764V788M1640.5 645V668M1642.5 653V654M1643.5 655V671M1643.5 813V842M1644.5 661V671M1646.5 658V666M1649.5 790V808M1653.5 658V674M1653.5 795V809M1655.5 652V661M1668.5 661V669M1669.5 816V978M1670.5 657V666M1677.5 670V673M1677.5 811V821M1679.5 827V834M1680.5 774V781M1684.5 821V827M1689.5 652V668M1689.5 794V810M1694.5 799V878M1695.5 664V667M1701.5 775V779M1703.5 658V666M1706.5 659V660M1708.5 797V800M1709.5 807V841M1714.5 640V651M1715.5 804V808M1716.5 808V857M1721.5 836V878M1724.5 663V667M1726.5 645V657M1726.5 821V900M1727.5 663V664M1732.5 661V662M1734.5 795V813M1745.5 655V658M1749.5 662V663M1750.5 779V788M1752.5 653V663M1752.5 798V828M1753.5 661V669M1754.5 822V847M1757.5 646V679M1758.5 792V869M1766.5 789V820M1770.5 783V800M1774.5 660V668M1777.5 651V670M1777.5 808V820M1780.5 812V843M1785.5 647V660M1785.5 777V852M1790.5 800V823M1792.5 813V842M1794.5 649V650M1796.5 678V679M1804.5 816V886M1808.5 798V805M1812.5 843V847M1816.5 766V775M1818.5 789V894M1823.5 642V660M1828.5 671V672M1828.5 837V913M1833.5 635V662M1835.5 806V813M1836.5 705V741" stroke="#8ae234" stroke-opacity="0.250" stroke-width="1" fill="none"/><path d="M323.5 628V649M323.5 815V824M325.5 643V645M325.5 833V857M327.5 646V649M331.5 764V800M334.5 768V801M336.5 839V848M355.5 645V650M360.5 822V833M361.5 639V652M373.5 778V887M381.5 809V832M385.5 776V782M388.5 652V660M391.5 780V828M393.5 652V660M394.5 644V660M402.5 654V663M408.5 821V847M410.5 644V662M414.5 826V912M415.5 650V656M416.5 648V650M423.5 657V663M428.5 660V667M431.5 648V663M441.5 655V657M444.5 661V669M445.5 790V799M446.5 670V672M451.5 652V666M453.5 668V669M469.5 771V801M471.5 660V667M472.5 775V808M473.5 775V843M483.5 663V666M494.5 650V659M503.5 663V670M515.5 809V866M525.5 797V807M534.5 662V672M536.5 676V677M540.5 772V800M543.5 658V665M547.5 809V834M548.5 651V668M556.5 650V670M557.5 762V822M563.5 649V668M574.5 819V880M578.5 768V809M581.5 653V662M583.5 788V831M584.5 651V671M596.5 659V670M600.5 667V671M600.5 845V852M605.5 835V869M609.5 674V678M612.5 647V665M612.5 779V785M613.5 779V817M615.5 782V790M617.5 810V840M629.5 817V886M631.5 828V849M632.5 773V778M633.5 659V663M637.5 801V813M638.5 652V658M639.5 802V820M642.5 669V670M645.5 652V656M647.5 789V803M650.5 641V654M650.5 775V847M652.5 844V848M654.5 809V869M663.5 664V671M663.5 788V857M666.5 772V797M667.5 650V664M668.5 653V664M669.5 763V798M672.5 662V670M673.5 650V662M677.5 664V668M680.5 661V663M686.5 776V804M688.5 651V659M689.5 799V824M691.5 667V668M696.5 652V656M701.5 787V830M704.5 763V809M706.5 806V816M708.5 800V814M711.5 657V664M712.5 656V657M716.5 789V970M726.5 790V804M727.5 799V851M728.5 644V651M732.5 646V677M732.5 777V809M735.5 647V665M738.5 802V826M741.5 785V794M746.5 660V677M746.5 857V885M752.5 771V779M753.5 663V667M757.5 761V789M761.5 778V871M762.5 642V648M767.5 640V655M768.5 655V660M769.5 660V668M770.5 668V671M780.5 643V653M788.5 668V673M797.5 797V804M799.5 780V844M800.5 809V846M802.5 658V665M805.5 820V830M809.5 662V673M812.5 657V662M815.5 777V863M823.5 649V668M824.5 795V848M826.5 810V843M832.5 826V880M833.5 804V928M834.5 647V658M837.5 648V656M840.5 656V669M843.5 778V797M847.5 656V671M847.5 781V787M848.5 658V671M855.5 647V653M856.5 830V865M858.5 674V676M861.5 671V672M865.5 647V666M871.5 649V653M873.5 646V659M873.5 751V759M875.5 663V665M875.5 754V793M881.5 744V798M887.5 651V660M891.5 661V672M892.5 782V843M899.5 661V666M911.5 651V657M913.5 663V672M914.5 806V816M919.5 663V666M922.5 657V660M925.5 774V796M928.5 781V796M932.5 798V820M933.5 806V814M940.5 659V665M947.5 800V858M948.5 651V652M952.5 668V670M954.5 653V659M955.5 659V660M961.5 815V894M962.5 781V815M966.5 792V823M968.5 646V650M985.5 780V877M990.5 675V679M993.5 664V672M995.5 663V668M1000.5 775V849M1001.5 650V664M1005.5 765V833M1013.5 656V671M1014.5 772V848M1015.5 772V773M1018.5 763V783M1026.5 657V661M1031.5 653V672M1034.5 667V672M1036.5 660V669M1039.5 788V862M1042.5 636V648M1043.5 775V846M1047.5 796V804M1051.5 792V799M1053.5 653V659M1056.5 764V771M1060.5 645V649M1064.5 771V776M1068.5 823V953M1070.5 794V800M1072.5 635V647M1074.5 798V817M1078.5 654V658M1081.5 660V668M1084.5 646V649M1086.5 771V812M1088.5 778V891M1094.5 663V665M1095.5 665V672M1099.5 640V656M1106.5 661V669M1113.5 770V820M1118.5 645V673M1118.5 813V833M1119.5 667V677M1121.5 648V650M1124.5 776V817M1126.5 775V783M1130.5 769V804M1142.5 750V833M1144.5 825V832M1145.5 651V656M1147.5 654V666M1148.5 656V661M1151.5 650V661M1160.5 767V775M1161.5 648V660M1165.5 658V672M1166.5 662V665M1168.5 772V853M1169.5 628V653M1174.5 653V657M1177.5 771V780M1178.5 780V784M1186.5 653V684M1186.5 817V861M1188.5 812V814M1191.5 648V653M1191.5 868V894M1201.5 663V664M1213.5 812V828M1219.5 779V805M1220.5 782V785M1231.5 645V648M1236.5 637V641M1236.5 815V849M1238.5 773V808M1240.5 782V844M1241.5 801V807M1245.5 658V660M1246.5 819V825M1252.5 663V664M1253.5 801V841M1255.5 666V667M1262.5 663V672M1265.5 787V791M1271.5 662V668M1273.5 649V651M1281.5 658V662M1281.5 827V830M1290.5 750V759M1292.5 799V814M1293.5 814V824M1300.5 650V663M1301.5 783V824M1302.5 653V669M1305.5 751V773M1308.5 765V771M1313.5 676V678M1313.5 761V802M1318.5 785V809M1321.5 652V657M1321.5 829V849M1325.5 837V862M1326.5 663V666M1327.5 654V666M1328.5 653V654M1332.5 656V660M1341.5 662V665M1343.5 798V812M1346.5 660V664M1349.5 654V671M1349.5 763V773M1355.5 783V797M1356.5 758V771M1361.5 668V678M1363.5 658V661M1366.5 798V805M1371.5 824V843M1373.5 776V815M1378.5 664V670M1378.5 787V792M1388.5 659V663M1391.5 652V662M1393.5 804V833M1395.5 663V666M1403.5 652V672M1405.5 772V822M1407.5 637V649M1411.5 816V877M1425.5 651V678M1429.5 647V659M1435.5 789V874M1437.5 659V672M1438.5 665V672M1439.5 774V858M1440.5 819V855M1443.5 662V669M1448.5 781V906M1449.5 656V667M1452.5 848V850M1455.5 771V773M1460.5 648V655M1461.5 815V861M1462.5 653V668M1463.5 814V846M1469.5 791V859M1480.5 812V816M1484.5 826V838M1486.5 802V814M1492.5 660V667M1494.5 770V786M1496.5 653V664M1496.5 792V869M1499.5 655V659M1501.5 765V791M1506.5 657V666M1509.5 649V652M1509.5 814V824M1511.5 775V795M1513.5 782V834M1514.5 654V663M1523.5 673V678M1527.5 808V868M1529.5 757V823M1531.5 769V782M1538.5 781V796M1541.5 798V805M1544.5 639V661M1546.5 664V670M1555.5 670V671M1563.5 822V865M1567.5 760V781M1569.5 779V782M1570.5 657V668M1574.5 659V668M1578.5 813V882M1583.5 792V807M1590.5 799V848M1593.5 643V667M1595.5 649V668M1599.5 666V669M1603.5 658V673M1605.5 775V782M1610.5 841V849M1613.5 648V653M1623.5 653V657M1623.5 816V825M1635.5 644V674M1637.5 764V777M1640.5 799V868M1645.5 824V858M1646.5 666V674M1650.5 770V786M1656.5 766V823M1665.5 663V673M1665.5 832V853M1671.5 670V671M1676.5 803V811M1678.5 654V667M1681.5 652V664M1682.5 788V812M1685.5 645V655M1686.5 783V802M1687.5 643V650M1690.5 667V668M1696.5 655V664M1697.5 780V806M1700.5 762V769M1701.5 769V775M1707.5 660V661M1712.5 672V678M1719.5 828V884M1725.5 810V813M1726.5 810V821M1727.5 664V669M1729.5 794V882M1730.5 649V671M1731.5 774V818M1733.5 651V661M1742.5 656V667M1755.5 640V656M1760.5 792V799M1762.5 863V872M1769.5 649V666M1770.5 778V783M1773.5 659V669M1773.5 772V805M1776.5 652V670M1776.5 805V808M1779.5 656V668M1780.5 781V812M1782.5 789V798M1784.5 775V802M1785.5 767V777M1788.5 667V668M1788.5 791V792M1791.5 667V678M1792.5 793V813M1795.5 798V818M1799.5 673V676M1802.5 819V841M1803.5 672V677M1805.5 654V673M1808.5 772V798M1810.5 655V658M1810.5 786V791M1812.5 664V667M1814.5 660V671M1815.5 790V850M1820.5 667V669M1821.5 656V667M1836.5 741V778" stroke="#8ae234" stroke-opacity="0.375" stroke-width="1" fill="none"/><path d="M323.5 809V815M329.5 644V647M330.5 637V638M331.5 637V650M336.5 647V656M338.5 635V667M339.5 788V807M342.5 641V647M348.5 784V798M349.5 660V662M357.5 779V845M359.5 642V649M359.5 756V808M362.5 752V773M363.5 759V772M365.5 653V656M366.5 653V655M367.5 799V820M368.5 770V820M369.5 644V648M371.5 652V656M371.5 791V835M372.5 652V653M373.5 653V657M377.5 656V657M380.5 643V654M382.5 648V662M383.5 648V651M385.5 636V644M386.5 644V658M388.5 775V778M390.5 780V809M393.5 801V821M395.5 817V833M404.5 770V803M405.5 782V803M409.5 643V644M410.5 662V664M410.5 807V862M411.5 819V862M412.5 819V854M417.5 781V841M418.5 648V656M419.5 758V822M421.5 803V853M422.5 792V853M433.5 795V822M434.5 659V661M443.5 665V666M443.5 857V873M452.5 792V815M457.5 678V681M459.5 643V674M460.5 643V663M460.5 796V798M477.5 652V662M478.5 652V661M479.5 783V810M486.5 656V669M489.5 650V678M490.5 650V664M491.5 775V780M497.5 665V666M506.5 799V808M511.5 810V836M512.5 790V836M513.5 657V669M514.5 657V675M517.5 759V771M519.5 770V832M520.5 780V828M522.5 660V669M525.5 672V673M525.5 794V797M527.5 843V956M530.5 654V659M533.5 641V662M538.5 659V663M539.5 659V660M541.5 649V658M541.5 759V788M542.5 649V658M542.5 788V815M545.5 780V783M547.5 645V668M555.5 806V869M556.5 822V869M558.5 764V815M559.5 815V821M568.5 794V799M569.5 794V867M571.5 810V849M579.5 650V653M580.5 650V664M585.5 819V841M595.5 771V816M598.5 803V838M600.5 789V845M601.5 777V816M603.5 662V676M604.5 643V676M609.5 814V852M610.5 672V674M619.5 663V664M621.5 659V674M624.5 663V674M635.5 789V792M648.5 655V662M655.5 809V843M656.5 788V843M657.5 665V666M657.5 788V810M666.5 756V772M683.5 650V665M684.5 790V804M687.5 758V762M692.5 651V667M694.5 798V840M696.5 656V670M697.5 679V681M699.5 665V668M702.5 769V833M703.5 763V833M705.5 664V667M718.5 788V797M722.5 856V862M723.5 656V658M737.5 652V657M737.5 769V789M738.5 652V666M739.5 656V669M740.5 656V681M744.5 658V667M745.5 658V660M753.5 800V804M761.5 659V671M763.5 787V788M764.5 642V644M765.5 663V665M765.5 831V849M766.5 811V849M774.5 765V773M777.5 659V667M778.5 795V799M789.5 776V832M790.5 830V832M791.5 657V666M797.5 783V797M804.5 793V820M805.5 648V654M809.5 804V864M812.5 757V790M813.5 757V774M816.5 658V667M818.5 665V669M819.5 664V665M820.5 664V666M821.5 799V801M824.5 645V649M825.5 645V662M826.5 782V810M829.5 669V673M833.5 654V665M841.5 779V811M843.5 643V665M844.5 643V663M844.5 778V785M848.5 781V848M853.5 758V777M854.5 644V647M854.5 782V783M860.5 790V838M861.5 773V799M863.5 803V841M867.5 654V670M879.5 772V782M882.5 655V659M887.5 660V677M901.5 659V669M903.5 831V885M906.5 766V769M912.5 657V662M912.5 798V839M915.5 806V817M916.5 658V660M917.5 658V681M922.5 803V807M925.5 647V656M926.5 656V660M932.5 659V661M933.5 798V806M935.5 835V938M936.5 779V835M944.5 654V679M948.5 652V659M956.5 665V668M956.5 783V814M957.5 811V814M964.5 779V858M966.5 658V667M979.5 647V663M980.5 647V673M981.5 673V677M982.5 677V680M996.5 668V669M1002.5 664V666M1003.5 751V761M1007.5 767V788M1008.5 767V787M1010.5 675V676M1020.5 760V772M1023.5 656V663M1028.5 662V663M1029.5 650V663M1030.5 816V864M1032.5 779V788M1049.5 791V818M1050.5 817V818M1052.5 790V806M1055.5 659V661M1061.5 813V834M1065.5 771V797M1066.5 785V797M1069.5 639V671M1070.5 639V650M1071.5 791V794M1088.5 775V778M1096.5 659V665M1096.5 771V786M1097.5 766V771M1102.5 638V665M1102.5 788V789M1103.5 638V652M1105.5 787V817M1110.5 675V682M1112.5 665V674M1113.5 665V667M1115.5 774V879M1116.5 766V879M1118.5 673V675M1123.5 654V658M1127.5 666V678M1135.5 794V822M1138.5 796V821M1147.5 796V814M1148.5 796V809M1149.5 809V813M1155.5 655V675M1162.5 795V812M1176.5 661V665M1177.5 661V663M1180.5 648V662M1180.5 786V805M1182.5 777V786M1192.5 799V810M1193.5 666V669M1193.5 762V810M1197.5 645V659M1198.5 645V657M1205.5 779V780M1206.5 778V829M1208.5 659V669M1209.5 659V661M1209.5 768V828M1218.5 654V682M1234.5 641V665M1240.5 676V681M1248.5 656V662M1248.5 781V836M1249.5 753V756M1250.5 823V847M1256.5 796V824M1257.5 784V824M1261.5 638V663M1263.5 657V664M1264.5 657V672M1271.5 772V779M1275.5 763V767M1278.5 847V873M1279.5 847V873M1282.5 662V665M1283.5 660V665M1284.5 660V661M1286.5 672V673M1287.5 818V865M1290.5 746V750M1296.5 662V663M1299.5 772V812M1301.5 666V669M1304.5 645V659M1304.5 788V791M1305.5 645V653M1323.5 784V819M1330.5 790V793M1332.5 786V790M1333.5 782V790M1335.5 657V658M1336.5 657V666M1338.5 662V664M1338.5 806V843M1339.5 790V843M1342.5 663V676M1344.5 812V828M1345.5 822V828M1347.5 662V664M1348.5 662V666M1351.5 790V809M1352.5 646V651M1357.5 648V665M1367.5 665V680M1369.5 816V869M1371.5 795V824M1372.5 664V665M1374.5 665V689M1380.5 788V895M1393.5 658V665M1394.5 792V804M1395.5 779V792M1400.5 656V665M1401.5 804V819M1402.5 797V819M1403.5 795V797M1405.5 661V666M1407.5 790V797M1415.5 650V666M1416.5 775V847M1417.5 782V847M1422.5 807V812M1423.5 812V826M1426.5 673V680M1435.5 767V789M1445.5 803V842M1449.5 781V863M1450.5 801V863M1453.5 670V672M1455.5 658V660M1456.5 658V667M1464.5 658V663M1470.5 638V650M1472.5 766V801M1475.5 779V780M1478.5 658V668M1479.5 658V673M1480.5 666V673M1495.5 668V670M1498.5 816V828M1502.5 659V673M1504.5 800V834M1508.5 652V659M1514.5 773V782M1516.5 656V658M1517.5 656V664M1517.5 786V806M1521.5 637V653M1527.5 653V662M1531.5 760V769M1532.5 787V821M1533.5 817V821M1536.5 766V778M1539.5 653V677M1545.5 661V664M1545.5 827V838M1546.5 805V838M1550.5 671V673M1553.5 787V807M1554.5 787V798M1558.5 807V845M1559.5 770V845M1561.5 810V858M1565.5 773V784M1571.5 778V823M1573.5 658V666M1576.5 661V663M1577.5 654V661M1578.5 786V813M1579.5 653V656M1580.5 653V664M1582.5 646V655M1585.5 660V668M1600.5 650V666M1602.5 766V770M1612.5 643V648M1615.5 775V871M1616.5 843V871M1626.5 808V845M1629.5 645V675M1630.5 786V792M1635.5 674V677M1641.5 778V787M1642.5 768V778M1645.5 791V824M1648.5 662V666M1649.5 662V664M1655.5 661V668M1663.5 655V657M1666.5 775V832M1669.5 801V816M1670.5 666V669M1670.5 801V829M1671.5 814V829M1673.5 660V662M1673.5 775V799M1682.5 664V666M1688.5 770V794M1692.5 776V805M1698.5 782V967M1701.5 655V659M1702.5 779V831M1703.5 778V831M1707.5 661V662M1709.5 672V673M1714.5 651V657M1716.5 632V660M1717.5 632V661M1720.5 647V654M1721.5 647V663M1723.5 667V669M1726.5 657V664M1735.5 795V834M1737.5 824V871M1742.5 769V860M1745.5 781V792M1746.5 792V802M1747.5 802V840M1748.5 812V840M1751.5 769V798M1756.5 831V856M1760.5 655V665M1762.5 835V863M1765.5 641V647M1766.5 641V659M1766.5 788V789M1768.5 811V818M1771.5 663V669M1771.5 778V795M1776.5 802V805M1793.5 650V670M1796.5 798V820M1798.5 666V672M1799.5 798V823M1800.5 656V676M1806.5 652V673M1807.5 652V656M1832.5 815V818" stroke="#8ae234" stroke-opacity="0.500" stroke-width="1" fill="none"/><path d="M323.5 649V652M324.5 643V652M324.5 820V824M326.5 818V857M328.5 646V647M330.5 766V800M341.5 641V657M344.5 759V761M347.5 643V646M350.5 791V793M353.5 771V777M354.5 642V650M358.5 642V648M360.5 639V649M364.5 656V657M370.5 644V656M372.5 835V887M376.5 656V657M376.5 774V807M377.5 774V777M384.5 636V651M384.5 765V782M389.5 804V809M394.5 801V833M400.5 796V801M407.5 653V659M408.5 643V653M413.5 854V912M417.5 648V656M418.5 763V841M419.5 648V656M420.5 803V822M429.5 653V667M430.5 648V653M430.5 748V759M436.5 678V679M437.5 672V679M440.5 649V655M443.5 666V669M446.5 672V681M449.5 800V815M451.5 787V792M453.5 807V815M454.5 668V672M457.5 768V816M464.5 784V804M468.5 655V677M468.5 755V758M470.5 789V801M471.5 766V808M474.5 658V675M474.5 820V843M478.5 798V810M482.5 785V789M484.5 781V802M493.5 650V672M504.5 663V671M505.5 661V671M505.5 768V808M510.5 773V810M514.5 675V678M524.5 662V666M526.5 792V956M528.5 839V843M529.5 654V660M529.5 784V839M532.5 641V663M539.5 660V661M539.5 798V800M543.5 798V815M546.5 645V665M555.5 666V670M555.5 783V806M558.5 762V764M560.5 799V821M566.5 649V667M567.5 781V799M570.5 849V867M572.5 662V664M575.5 659V678M578.5 767V768M582.5 653V670M583.5 651V670M583.5 772V788M584.5 772V841M585.5 654V671M591.5 755V789M595.5 659V661M597.5 790V797M599.5 838V852M605.5 643V656M607.5 677V678M614.5 798V817M616.5 770V840M619.5 817V818M625.5 656V674M628.5 794V886M630.5 817V849M631.5 665V676M632.5 770V773M633.5 778V780M634.5 780V792M637.5 652V663M638.5 801V802M648.5 771V803M649.5 814V847M651.5 806V848M653.5 776V869M655.5 652V668M664.5 664V680M665.5 668V677M667.5 797V822M670.5 798V817M671.5 658V678M674.5 650V656M675.5 763V771M678.5 769V776M679.5 661V666M680.5 792V819M681.5 663V673M687.5 659V661M691.5 668V676M695.5 812V840M696.5 670V675M696.5 766V785M699.5 668V677M700.5 803V830M701.5 768V787M705.5 809V816M710.5 664V672M721.5 795V862M722.5 656V669M725.5 658V669M726.5 656V669M728.5 820V851M729.5 644V648M729.5 802V810M731.5 646V656M731.5 777V779M733.5 675V677M737.5 657V665M739.5 807V826M743.5 654V667M747.5 824V857M754.5 783V804M766.5 640V665M767.5 796V811M768.5 783V785M772.5 791V794M781.5 643V670M786.5 787V792M792.5 805V818M795.5 665V683M799.5 773V780M800.5 773V809M801.5 783V846M803.5 762V804M804.5 648V674M806.5 796V830M808.5 769V804M809.5 673V675M810.5 785V864M811.5 657V679M811.5 785V790M814.5 842V863M817.5 658V673M828.5 671V673M831.5 803V880M832.5 654V672M832.5 804V826M835.5 647V668M838.5 656V660M839.5 656V660M842.5 779V797M853.5 644V662M855.5 783V865M858.5 786V830M859.5 786V838M863.5 656V664M864.5 820V841M866.5 775V811M872.5 646V649M875.5 665V666M877.5 663V678M880.5 654V675M883.5 794V819M891.5 786V843M898.5 805V809M900.5 659V666M902.5 669V672M902.5 805V831M903.5 672V674M904.5 808V885M907.5 667V675M909.5 663V668M910.5 651V663M911.5 768V839M913.5 798V816M916.5 815V817M921.5 769V807M923.5 794V803M924.5 647V660M924.5 774V780M927.5 781V786M930.5 654V655M930.5 762V811M931.5 655V661M934.5 814V938M937.5 661V670M939.5 659V660M944.5 782V796M946.5 797V858M947.5 780V800M949.5 651V654M953.5 653V667M955.5 790V791M965.5 792V858M967.5 798V823M969.5 646V664M969.5 786V796M982.5 778V809M986.5 835V877M997.5 819V825M998.5 804V819M999.5 775V777M1000.5 650V657M1007.5 648V661M1011.5 663V676M1012.5 779V832M1013.5 780V848M1014.5 656V670M1016.5 762V773M1019.5 772V783M1022.5 661V663M1024.5 656V660M1027.5 657V662M1029.5 795V816M1030.5 650V655M1031.5 779V864M1036.5 669V673M1038.5 818V862M1039.5 658V665M1042.5 841V846M1043.5 636V667M1045.5 769V775M1047.5 657V663M1053.5 806V828M1054.5 653V661M1056.5 649V659M1060.5 781V813M1062.5 816V834M1068.5 659V671M1069.5 800V953M1071.5 635V650M1073.5 795V817M1080.5 859V864M1081.5 821V859M1082.5 660V668M1083.5 649V669M1085.5 646V667M1089.5 813V891M1097.5 659V671M1100.5 656V675M1104.5 803V817M1106.5 787V794M1109.5 667V669M1111.5 674V682M1117.5 645V656M1119.5 831V833M1122.5 664V667M1126.5 662V663M1136.5 767V771M1141.5 753V808M1144.5 651V662M1148.5 661V666M1153.5 654V658M1159.5 672V686M1162.5 648V668M1167.5 770V772M1168.5 628V655M1175.5 790V796M1176.5 665V666M1178.5 771V780M1181.5 648V649M1185.5 789V817M1187.5 803V861M1188.5 803V812M1189.5 650V656M1190.5 839V894M1191.5 653V660M1191.5 799V868M1200.5 749V763M1207.5 669V671M1207.5 808V829M1208.5 791V828M1214.5 800V828M1217.5 680V682M1219.5 654V663M1220.5 779V782M1222.5 661V670M1223.5 651V653M1223.5 761V815M1225.5 770V784M1226.5 800V809M1231.5 648V651M1233.5 641V646M1239.5 773V844M1244.5 809V827M1245.5 809V825M1247.5 819V836M1251.5 782V847M1252.5 760V841M1258.5 662V673M1260.5 638V662M1266.5 765V791M1267.5 765V793M1269.5 665V669M1269.5 786V813M1270.5 782V786M1271.5 668V675M1272.5 651V662M1274.5 649V657M1274.5 767V769M1276.5 768V815M1277.5 815V873M1280.5 658V666M1280.5 830V873M1283.5 763V765M1284.5 661V670M1285.5 670V676M1286.5 841V865M1292.5 668V676M1294.5 814V824M1297.5 662V676M1298.5 772V775M1300.5 812V824M1303.5 653V659M1306.5 653V673M1307.5 670V672M1308.5 662V670M1314.5 650V661M1314.5 767V802M1315.5 767V774M1317.5 801V809M1318.5 659V665M1322.5 652V654M1322.5 784V849M1324.5 819V862M1325.5 653V663M1337.5 664V666M1345.5 660V674M1348.5 666V671M1350.5 654V658M1350.5 763V790M1354.5 668V683M1362.5 666V668M1364.5 658V665M1364.5 785V818M1365.5 785V805M1368.5 818V869M1369.5 785V816M1370.5 815V843M1372.5 760V795M1379.5 759V895M1381.5 779V785M1382.5 779V790M1406.5 797V822M1411.5 663V678M1412.5 798V877M1421.5 782V807M1424.5 651V659M1428.5 647V655M1430.5 659V684M1438.5 849V858M1441.5 807V855M1442.5 802V807M1444.5 823V842M1445.5 786V803M1447.5 822V906M1451.5 801V850M1453.5 763V779M1454.5 763V771M1455.5 660V661M1461.5 648V653M1462.5 802V810M1463.5 658V668M1464.5 790V846M1469.5 638V671M1472.5 765V766M1476.5 668V673M1481.5 781V812M1483.5 749V753M1484.5 749V826M1485.5 814V838M1495.5 808V869M1496.5 789V792M1499.5 819V828M1500.5 763V799M1503.5 808V834M1504.5 774V800M1505.5 774V809M1506.5 666V673M1506.5 783V809M1507.5 767V783M1508.5 767V824M1515.5 654V671M1516.5 658V671M1518.5 822V839M1521.5 763V782M1522.5 637V660M1523.5 801V836M1524.5 665V678M1528.5 671V675M1528.5 755V868M1537.5 766V796M1538.5 653V654M1539.5 677V681M1551.5 671V672M1560.5 770V858M1562.5 770V780M1563.5 771V822M1568.5 759V766M1570.5 787V823M1571.5 657V659M1572.5 658V659M1575.5 803V812M1578.5 654V656M1583.5 646V658M1584.5 660V668M1596.5 669V674M1602.5 760V766M1604.5 658V661M1608.5 781V800M1611.5 643V656M1611.5 815V849M1624.5 656V657M1628.5 645V662M1636.5 644V654M1639.5 858V868M1642.5 654V655M1643.5 768V813M1651.5 664V677M1652.5 764V795M1653.5 674V680M1655.5 780V823M1662.5 655V658M1667.5 767V775M1675.5 671V676M1678.5 667V673M1679.5 654V673M1680.5 652V671M1682.5 775V788M1687.5 650V653M1687.5 771V802M1689.5 668V678M1690.5 668V674M1692.5 768V776M1693.5 669V679M1695.5 667V672M1696.5 802V806M1698.5 664V676M1699.5 791V967M1700.5 655V665M1709.5 803V807M1712.5 801V802M1720.5 793V884M1727.5 669V685M1732.5 807V818M1734.5 651V652M1736.5 834V871M1740.5 773V775M1741.5 656V661M1741.5 769V773M1743.5 794V860M1749.5 663V666M1754.5 640V661M1761.5 799V872M1765.5 752V788M1770.5 649V663M1772.5 659V669M1772.5 795V805M1774.5 745V772M1775.5 652V660M1782.5 675V677M1784.5 767V775M1790.5 662V678M1793.5 793V816M1794.5 816V818M1797.5 666V673M1797.5 815V820M1798.5 672V673M1800.5 819V823M1801.5 656V666M1801.5 786V841M1806.5 763V769M1808.5 656V684M1809.5 658V671M1811.5 655V669M1811.5 830V843M1812.5 667V669M1815.5 660V665M1820.5 757V765M1830.5 765V818" stroke="#8ae234" stroke-opacity="0.625" stroke-width="1" fill="none"/><path d="M322.5 628V645M327.5 739V818M334.5 752V768M335.5 647V657M337.5 656V663M337.5 821V848M348.5 652V662M353.5 744V771M356.5 634V642M360.5 756V822M361.5 788V833M363.5 752V759M380.5 654V656M381.5 806V809M387.5 652V658M391.5 652V675M392.5 821V828M395.5 644V657M396.5 643V657M400.5 656V657M401.5 653V656M403.5 651V666M403.5 770V786M410.5 767V807M416.5 781V833M424.5 643V663M427.5 656V659M431.5 758V774M432.5 643V663M432.5 781V801M446.5 778V799M447.5 667V671M448.5 672V681M450.5 652V665M460.5 772V796M461.5 661V663M469.5 654V677M480.5 783V808M481.5 670V671M482.5 663V664M484.5 656V666M487.5 660V669M489.5 678V682M490.5 775V777M495.5 654V659M496.5 663V665M499.5 743V760M500.5 651V657M508.5 790V808M511.5 654V669M516.5 759V866M518.5 662V673M518.5 825V852M520.5 774V780M525.5 781V794M526.5 781V792M535.5 664V672M544.5 657V668M545.5 655V665M546.5 783V834M549.5 792V813M551.5 656V659M557.5 650V672M559.5 668V671M561.5 651V666M562.5 649V651M563.5 775V867M564.5 753V793M566.5 768V781M571.5 664V669M573.5 808V880M576.5 675V678M582.5 793V831M586.5 805V806M592.5 789V800M594.5 816V862M599.5 669V671M601.5 664V667M602.5 793V816M605.5 830V835M606.5 771V869M607.5 771V824M613.5 647V656M615.5 770V782M618.5 660V663M620.5 664V674M624.5 774V845M626.5 792V835M627.5 643V664M631.5 758V828M632.5 659V676M632.5 758V770M636.5 789V813M640.5 647V656M642.5 826V844M643.5 665V669M644.5 652V665M646.5 778V783M647.5 668V669M649.5 771V814M651.5 641V664M651.5 775V806M652.5 650V664M652.5 776V844M657.5 666V673M658.5 811V832M661.5 649V661M665.5 677V680M665.5 756V772M673.5 783V791M676.5 661V662M677.5 784V807M679.5 666V675M688.5 798V824M690.5 639V656M695.5 652V669M703.5 659V661M706.5 664V671M707.5 660V661M711.5 808V831M717.5 664V666M717.5 837V970M719.5 767V788M720.5 669V674M725.5 804V874M727.5 790V799M733.5 809V815M736.5 647V665M742.5 649V654M742.5 768V846M744.5 769V793M745.5 793V885M747.5 657V665M749.5 652V675M753.5 771V800M755.5 661V678M757.5 738V761M759.5 662V670M762.5 771V871M763.5 767V787M764.5 799V831M767.5 785V796M769.5 783V796M770.5 794V808M772.5 647V650M772.5 762V791M773.5 762V789M775.5 750V769M779.5 653V671M786.5 653V670M786.5 781V787M790.5 807V830M791.5 798V807M792.5 790V805M793.5 672V675M795.5 819V830M797.5 659V662M798.5 662V667M798.5 804V844M802.5 665V669M802.5 783V810M803.5 669V674M805.5 654V658M806.5 756V796M808.5 651V662M817.5 798V813M818.5 669V673M825.5 782V848M826.5 673V675M827.5 663V673M827.5 784V843M834.5 811V928M842.5 665V666M845.5 657V663M845.5 764V786M846.5 783V787M849.5 658V673M850.5 787V862M853.5 750V758M860.5 768V790M866.5 666V670M870.5 658V672M871.5 653V658M874.5 785V793M882.5 659V678M883.5 791V794M888.5 651V655M889.5 655V656M892.5 668V672M892.5 772V782M893.5 772V806M894.5 806V850M901.5 788V805M904.5 655V674M906.5 662V667M907.5 783V819M908.5 668V671M912.5 662V672M914.5 663V672M918.5 663V681M919.5 666V672M920.5 762V787M921.5 660V676M921.5 762V769M923.5 657V678M924.5 660V664M926.5 796V825M931.5 758V820M934.5 655V659M937.5 779V792M939.5 786V813M940.5 805V896M942.5 643V654M944.5 679V680M946.5 641V654M958.5 662V663M959.5 636V663M960.5 849V894M963.5 666V669M967.5 630V650M972.5 791V850M977.5 658V659M983.5 659V680M987.5 661V669M989.5 820V866M991.5 670V679M992.5 656V674M993.5 672V676M994.5 641V664M998.5 664V667M998.5 777V804M999.5 657V664M1001.5 798V849M1004.5 759V833M1012.5 660V672M1021.5 760V794M1023.5 769V791M1025.5 849V859M1026.5 808V886M1030.5 655V659M1035.5 667V673M1038.5 656V658M1041.5 799V822M1043.5 667V674M1044.5 658V674M1046.5 752V769M1048.5 791V804M1050.5 670V676M1052.5 638V659M1056.5 762V764M1057.5 642V649M1059.5 649V663M1061.5 645V656M1066.5 750V785M1067.5 750V823M1073.5 647V665M1079.5 787V869M1082.5 668V669M1085.5 812V831M1086.5 657V667M1090.5 813V823M1096.5 665V672M1098.5 640V671M1116.5 659V664M1117.5 750V813M1120.5 648V667M1121.5 808V820M1123.5 773V788M1124.5 773V776M1125.5 641V659M1125.5 772V817M1126.5 663V664M1127.5 783V797M1130.5 652V655M1133.5 667V670M1135.5 767V794M1137.5 661V665M1137.5 796V905M1141.5 658V660M1141.5 752V753M1143.5 660V664M1143.5 832V833M1146.5 654V656M1149.5 656V661M1152.5 650V654M1155.5 675V676M1156.5 663V675M1158.5 802V808M1163.5 633V668M1163.5 812V830M1165.5 787V883M1170.5 830V934M1171.5 653V664M1173.5 768V844M1175.5 653V666M1178.5 652V662M1185.5 653V658M1189.5 814V839M1190.5 648V650M1191.5 660V661M1194.5 762V820M1196.5 789V822M1202.5 649V662M1205.5 778V779M1208.5 785V791M1218.5 805V867M1224.5 763V855M1226.5 784V800M1228.5 656V658M1232.5 645V646M1232.5 804V805M1235.5 637V665M1237.5 812V849M1244.5 658V670M1249.5 664V680M1250.5 651V656M1251.5 760V782M1255.5 796V797M1257.5 778V784M1262.5 672V677M1264.5 763V765M1267.5 645V656M1275.5 651V657M1276.5 763V768M1279.5 672V673M1282.5 759V827M1285.5 676V680M1287.5 782V818M1289.5 662V668M1299.5 650V655M1300.5 663V664M1303.5 795V816M1304.5 748V788M1315.5 639V654M1318.5 665V668M1325.5 800V837M1329.5 642V653M1334.5 652V658M1337.5 756V785M1342.5 798V809M1346.5 806V822M1348.5 803V848M1351.5 644V675M1352.5 811V829M1354.5 769V797M1359.5 808V838M1366.5 660V665M1367.5 798V802M1370.5 785V815M1374.5 815V846M1377.5 664V670M1378.5 784V787M1389.5 659V661M1392.5 673V680M1392.5 806V833M1393.5 665V676M1394.5 655V658M1395.5 778V779M1398.5 655V679M1404.5 652V661M1406.5 637V666M1407.5 649V665M1410.5 647V678M1413.5 767V836M1414.5 751V754M1421.5 769V782M1423.5 656V659M1425.5 678V680M1428.5 655V663M1430.5 684V685M1431.5 670V685M1432.5 665V667M1433.5 664V668M1434.5 827V874M1435.5 650V661M1436.5 659V661M1440.5 650V662M1442.5 658V675M1444.5 658V662M1447.5 818V822M1451.5 645V671M1453.5 672V675M1456.5 773V838M1460.5 828V861M1461.5 802V815M1465.5 790V795M1467.5 789V818M1470.5 809V859M1472.5 656V661M1479.5 770V816M1482.5 757V765M1486.5 658V662M1488.5 791V802M1490.5 804V808M1493.5 667V672M1496.5 762V789M1497.5 653V658M1499.5 799V819M1500.5 655V661M1501.5 763V765M1504.5 644V647M1510.5 649V661M1512.5 795V834M1513.5 657V663M1515.5 773V846M1517.5 664V669M1522.5 660V663M1522.5 782V801M1525.5 647V665M1525.5 800V845M1527.5 662V682M1529.5 755V757M1530.5 760V823M1540.5 669V681M1540.5 769V805M1541.5 656V664M1543.5 639V657M1544.5 822V827M1552.5 662V672M1556.5 657V670M1563.5 653V662M1564.5 773V865M1565.5 648V670M1567.5 759V760M1575.5 659V663M1584.5 794V807M1592.5 643V661M1597.5 669V674M1597.5 794V816M1600.5 825V826M1602.5 642V665M1606.5 778V782M1608.5 651V665M1613.5 796V797M1620.5 788V799M1622.5 766V831M1623.5 766V816M1624.5 787V825M1626.5 800V808M1628.5 769V776M1630.5 778V786M1631.5 666V668M1635.5 785V816M1641.5 645V653M1644.5 810V842M1645.5 661V663M1646.5 797V858M1647.5 658V666M1649.5 778V790M1653.5 680V682M1654.5 780V809M1656.5 748V766M1664.5 778V853M1669.5 657V661M1670.5 669V670M1671.5 804V814M1674.5 662V676M1676.5 670V671M1678.5 821V834M1680.5 766V774M1681.5 776V781M1683.5 663V664M1684.5 645V651M1685.5 783V827M1686.5 643V655M1690.5 674V683M1690.5 805V810M1691.5 660V667M1693.5 768V878M1694.5 672V679M1694.5 780V799M1695.5 780V786M1696.5 786V802M1697.5 655V661M1699.5 666V676M1700.5 761V762M1707.5 662V670M1709.5 800V803M1715.5 640V649M1717.5 793V857M1718.5 793V828M1719.5 654V664M1720.5 773V793M1722.5 794V878M1725.5 645V663M1730.5 777V882M1735.5 662V671M1736.5 671V684M1737.5 665V683M1743.5 662V667M1744.5 781V794M1750.5 662V667M1750.5 769V779M1751.5 653V667M1754.5 768V822M1755.5 831V847M1756.5 656V679M1757.5 856V869M1767.5 659V668M1767.5 811V820M1774.5 668V669M1778.5 651V656M1783.5 798V802M1784.5 647V665M1786.5 819V852M1787.5 751V819M1789.5 792V823M1791.5 800V842M1792.5 667V670M1795.5 649V664M1804.5 654V677M1809.5 786V805M1813.5 664V678M1813.5 797V847M1814.5 797V850M1822.5 656V660M1824.5 642V663M1827.5 781V796" stroke="#8ae234" stroke-opacity="0.750" stroke-width="1" fill="none"/><path d="M319.5 634V642M319.5 757V823M321.5 757V854M325.5 820V833M326.5 645V649M328.5 739V771M333.5 752V767M334.5 647V653M335.5 801V839M340.5 635V657M342.5 742V778M343.5 636V647M345.5 786V826M350.5 779V791M351.5 770V978M357.5 642V648M366.5 655V663M366.5 786V799M367.5 651V663M369.5 648V659M373.5 657V662M374.5 656V662M374.5 778V785M375.5 785V868M377.5 657V661M378.5 638V661M378.5 775V784M381.5 656V673M382.5 662V663M382.5 839V848M389.5 657V660M398.5 770V810M402.5 808V832M404.5 663V671M407.5 659V663M409.5 767V821M410.5 664V666M411.5 664V666M426.5 658V659M433.5 781V795M435.5 637V661M438.5 776V792M445.5 660V682M447.5 671V672M447.5 778V848M454.5 807V831M456.5 665V680M458.5 674V681M462.5 824V834M469.5 750V771M473.5 645V656M475.5 659V675M475.5 780V820M477.5 786V798M479.5 657V661M480.5 662V671M482.5 664V670M492.5 648V672M492.5 780V784M493.5 813V828M495.5 784V827M498.5 661V666M498.5 768V785M500.5 743V780M501.5 785V814M502.5 651V654M504.5 768V820M507.5 777V787M513.5 669V673M513.5 790V851M515.5 648V684M516.5 661V662M519.5 661V673M520.5 770V774M521.5 670V676M522.5 849V854M523.5 647V662M526.5 661V673M527.5 655V660M530.5 766V775M531.5 659V663M536.5 798V833M538.5 663V671M538.5 798V832M540.5 658V661M540.5 759V772M544.5 780V794M551.5 659V664M553.5 664V666M554.5 779V783M560.5 770V799M562.5 770V775M565.5 660V667M574.5 655V662M574.5 796V819M579.5 767V775M581.5 662V664M587.5 651V669M588.5 777V795M589.5 651V672M589.5 777V821M590.5 753V797M593.5 654V660M597.5 670V671M602.5 657V664M604.5 799V807M605.5 807V830M606.5 656V678M608.5 667V678M608.5 852V904M611.5 770V791M614.5 790V798M616.5 653V661M617.5 760V810M620.5 826V839M621.5 805V807M622.5 652V659M622.5 785V805M627.5 792V794M628.5 664V665M629.5 662V665M630.5 642V657M641.5 656V657M642.5 670V675M647.5 783V789M648.5 662V668M656.5 659V673M662.5 661V671M662.5 788V819M664.5 772V871M666.5 650V656M668.5 763V847M670.5 653V658M671.5 766V854M672.5 670V678M674.5 763V780M681.5 819V821M688.5 745V798M691.5 777V844M696.5 675V679M698.5 659V681M700.5 787V803M702.5 649V656M702.5 768V769M705.5 667V671M707.5 782V806M708.5 782V800M709.5 652V672M712.5 802V808M713.5 802V815M714.5 647V656M715.5 651V656M716.5 772V789M720.5 767V795M724.5 874V935M727.5 651V656M734.5 661V665M736.5 769V772M738.5 666V669M741.5 656V681M747.5 665V677M748.5 662V675M749.5 815V836M750.5 646V648M754.5 659V663M758.5 738V787M759.5 752V756M760.5 651V659M760.5 752V765M761.5 777V778M762.5 648V671M762.5 767V771M774.5 648V659M778.5 667V671M781.5 670V673M782.5 795V849M783.5 658V662M786.5 778V781M787.5 778V800M791.5 776V798M792.5 776V790M793.5 900V943M796.5 783V796M798.5 667V673M799.5 651V653M810.5 675V679M815.5 658V667M816.5 775V798M822.5 801V813M825.5 662V675M830.5 792V797M833.5 665V675M836.5 644V666M836.5 810V885M841.5 666V669M851.5 653V666M852.5 748V790M853.5 748V750M856.5 653V663M857.5 663V687M859.5 662V677M860.5 672V677M860.5 761V768M864.5 645V656M865.5 775V820M868.5 799V867M869.5 799V824M872.5 804V805M874.5 751V785M875.5 748V754M876.5 748V813M877.5 813V831M880.5 744V772M881.5 653V675M882.5 791V803M884.5 819V823M885.5 825V852M886.5 778V825M889.5 776V785M890.5 771V786M895.5 666V675M897.5 658V672M899.5 805V834M907.5 766V783M908.5 819V841M914.5 672V674M915.5 660V674M918.5 794V795M919.5 794V797M923.5 780V794M924.5 664V678M926.5 660V664M930.5 758V762M938.5 656V660M940.5 665V669M940.5 786V805M943.5 654V687M943.5 782V829M953.5 667V670M955.5 783V790M960.5 767V849M965.5 661V667M968.5 796V798M970.5 786V850M972.5 769V791M973.5 643V668M975.5 786V849M981.5 771V817M982.5 771V778M983.5 773V833M984.5 764V773M985.5 663V665M985.5 764V780M987.5 789V835M988.5 648V651M989.5 671V675M991.5 830V847M992.5 674V676M993.5 779V816M994.5 779V932M998.5 667V674M1002.5 770V774M1003.5 641V670M1005.5 668V670M1005.5 753V765M1009.5 834V893M1013.5 671V672M1013.5 779V780M1016.5 654V683M1017.5 646V673M1024.5 791V849M1027.5 802V808M1033.5 644V672M1033.5 782V825M1041.5 648V665M1046.5 644V677M1047.5 663V666M1047.5 752V796M1051.5 655V676M1051.5 787V792M1057.5 771V775M1058.5 775V849M1063.5 776V816M1067.5 648V678M1074.5 643V665M1076.5 779V785M1077.5 671V676M1078.5 658V676M1078.5 787V870M1087.5 652V657M1090.5 656V663M1093.5 657V663M1093.5 815V911M1095.5 786V791M1098.5 766V800M1100.5 787V887M1101.5 665V675M1103.5 803V810M1107.5 668V669M1108.5 667V668M1108.5 809V833M1111.5 782V785M1112.5 854V864M1115.5 648V664M1117.5 656V664M1118.5 675V677M1121.5 650V664M1121.5 802V808M1123.5 658V667M1124.5 648V659M1125.5 761V772M1126.5 664V666M1126.5 761V775M1128.5 837V959M1133.5 783V796M1134.5 783V924M1140.5 883V899M1141.5 750V752M1146.5 814V832M1150.5 863V909M1153.5 795V833M1154.5 650V658M1160.5 662V667M1161.5 660V661M1166.5 665V672M1166.5 770V787M1167.5 661V665M1170.5 653V664M1174.5 768V771M1178.5 662V663M1179.5 648V662M1179.5 784V863M1183.5 777V820M1187.5 654V684M1198.5 781V801M1202.5 756V777M1204.5 768V836M1208.5 780V785M1210.5 641V661M1210.5 768V798M1211.5 814V835M1212.5 651V673M1213.5 645V673M1216.5 650V680M1216.5 861V888M1222.5 761V864M1223.5 653V661M1230.5 659V671M1230.5 797V825M1233.5 787V795M1239.5 657V681M1242.5 660V664M1248.5 662V663M1251.5 656V663M1254.5 663V665M1254.5 797V801M1257.5 653V662M1258.5 673V675M1259.5 662V670M1262.5 677V679M1263.5 664V679M1265.5 763V787M1268.5 793V831M1273.5 798V821M1278.5 635V660M1280.5 666V669M1283.5 759V763M1285.5 680V682M1286.5 673V682M1287.5 657V666M1289.5 759V806M1291.5 666V668M1291.5 746V773M1292.5 676V682M1293.5 654V682M1296.5 816V822M1297.5 775V816M1298.5 668V676M1299.5 655V668M1304.5 735V748M1305.5 735V751M1307.5 765V798M1311.5 781V814M1312.5 761V781M1314.5 661V678M1316.5 774V801M1317.5 639V668M1319.5 746V782M1320.5 655V657M1328.5 793V819M1330.5 787V790M1331.5 786V787M1334.5 768V778M1336.5 756V758M1340.5 655V662M1341.5 665V684M1341.5 782V829M1342.5 676V684M1347.5 803V806M1353.5 769V811M1355.5 758V783M1357.5 804V806M1360.5 770V778M1369.5 665V666M1370.5 659V666M1375.5 819V899M1376.5 660V670M1377.5 792V866M1378.5 759V784M1380.5 672V674M1381.5 657V675M1383.5 790V873M1385.5 649V650M1387.5 810V814M1388.5 780V788M1390.5 649V661M1391.5 662V663M1393.5 676V680M1397.5 786V807M1399.5 670V679M1400.5 804V834M1407.5 766V790M1408.5 766V829M1412.5 660V663M1412.5 767V798M1415.5 744V775M1419.5 663V665M1421.5 661V663M1422.5 655V663M1424.5 826V839M1427.5 761V836M1430.5 827V838M1432.5 667V670M1434.5 665V668M1436.5 767V788M1437.5 832V849M1443.5 669V675M1447.5 667V671M1452.5 674V675M1458.5 652V661M1459.5 655V661M1465.5 652V663M1471.5 801V809M1473.5 653V656M1474.5 780V799M1475.5 653V663M1478.5 770V796M1485.5 648V658M1488.5 662V671M1490.5 659V661M1491.5 804V856M1493.5 786V838M1494.5 670V673M1502.5 798V808M1508.5 659V663M1509.5 763V814M1511.5 659V661M1519.5 664V685M1520.5 763V846M1526.5 643V653M1528.5 675V682M1529.5 660V670M1531.5 653V659M1532.5 782V787M1534.5 654V661M1541.5 664V669M1543.5 657V665M1543.5 798V822M1547.5 771V800M1548.5 771V788M1549.5 788V823M1550.5 835V837M1552.5 818V830M1554.5 669V670M1555.5 798V852M1557.5 652V657M1562.5 657V662M1562.5 766V770M1563.5 766V771M1566.5 669V670M1566.5 781V846M1573.5 666V668M1574.5 803V807M1576.5 812V889M1580.5 759V799M1587.5 649V661M1587.5 807V878M1588.5 807V857M1594.5 635V667M1595.5 770V804M1600.5 811V825M1601.5 760V815M1602.5 665V673M1603.5 775V783M1605.5 663V666M1606.5 666V667M1607.5 778V811M1617.5 807V843M1618.5 801V807M1619.5 817V832M1625.5 787V856M1627.5 662V671M1627.5 795V800M1629.5 792V814M1630.5 668V675M1632.5 664V666M1632.5 794V804M1634.5 677V678M1634.5 753V833M1636.5 777V847M1637.5 654V673M1638.5 671V673M1639.5 788V858M1645.5 663V674M1649.5 770V778M1651.5 764V799M1652.5 658V677M1654.5 652V682M1656.5 738V748M1657.5 746V778M1658.5 662V667M1659.5 662V667M1661.5 658V662M1662.5 798V814M1663.5 778V798M1667.5 754V767M1668.5 761V978M1671.5 766V804M1672.5 659V671M1679.5 796V827M1680.5 671V673M1681.5 775V776M1688.5 652V653M1692.5 656V669M1697.5 661V664M1699.5 761V791M1702.5 659V666M1704.5 657V664M1705.5 659V664M1705.5 775V783M1710.5 664V675M1710.5 817V841M1711.5 802V817M1713.5 747V767M1724.5 813V823M1727.5 794V900M1733.5 807V813M1737.5 683V684M1738.5 824V884M1752.5 663V669M1753.5 763V828M1754.5 763V768M1758.5 646V647M1764.5 752V795M1775.5 745V802M1779.5 831V843M1781.5 781V789M1787.5 645V664M1788.5 751V791M1795.5 664V679M1800.5 786V819M1802.5 666V672M1803.5 798V819M1804.5 798V816M1805.5 769V886M1809.5 671V684M1814.5 671V678M1815.5 789V790M1816.5 660V665M1817.5 766V894M1818.5 666V670M1818.5 787V789M1819.5 750V787M1821.5 765V801M1825.5 663V666M1829.5 846V913M1830.5 663V666M1832.5 649V662M1833.5 784V815M1834.5 635V656M1834.5 784V813M1835.5 651V656" stroke="#8ae234" stroke-opacity="0.875" stroke-width="1" fill="none"/><path d="M319.5 642V757M320.5 642V757M321.5 632V757M322.5 645V809M323.5 652V809M324.5 652V820M325.5 645V820M326.5 649V818M327.5 649V739M328.5 647V739M329.5 647V766M330.5 638V766M331.5 650V764M332.5 650V764M333.5 659V752M334.5 653V752M335.5 657V801M336.5 656V839M337.5 663V821M338.5 667V807M339.5 635V788M340.5 657V788M341.5 657V788M342.5 647V742M343.5 647V742M344.5 648V759M345.5 648V786M346.5 628V798M347.5 646V798M348.5 662V784M349.5 662V779M350.5 660V779M351.5 660V770M352.5 639V744M353.5 642V744M354.5 650V777M355.5 650V829M356.5 642V851M357.5 648V779M358.5 648V888M359.5 649V756M360.5 649V756M361.5 652V788M362.5 652V752M363.5 657V752M364.5 657V772M365.5 656V774M366.5 663V786M367.5 663V799M368.5 639V770M369.5 659V822M370.5 656V791M371.5 656V791M372.5 653V835M373.5 662V778M374.5 662V778M375.5 665V785M376.5 657V774M377.5 661V774M378.5 661V775M379.5 640V775M380.5 656V897M381.5 673V806M382.5 663V839M383.5 651V839M384.5 651V765M385.5 644V776M386.5 658V776M387.5 658V871M388.5 660V775M389.5 660V804M390.5 675V780M391.5 675V780M392.5 652V821M393.5 660V801M394.5 660V801M395.5 657V817M396.5 657V817M397.5 649V832M398.5 648V770M399.5 657V801M400.5 657V796M401.5 656V796M402.5 663V808M403.5 666V770M404.5 671V770M405.5 666V782M406.5 664V849M407.5 663V847M408.5 653V821M409.5 644V767M410.5 666V767M411.5 666V819M412.5 659V819M413.5 656V854M414.5 656V826M415.5 656V826M416.5 650V781M417.5 656V781M418.5 656V763M419.5 656V758M420.5 668V803M421.5 660V803M422.5 647V792M423.5 663V802M424.5 663V797M425.5 653V797M426.5 659V799M427.5 659V794M428.5 667V794M429.5 667V869M430.5 653V748M431.5 663V758M432.5 663V781M433.5 659V781M434.5 661V880M435.5 661V757M436.5 679V778M437.5 679V789M438.5 663V776M439.5 640V776M440.5 655V841M441.5 657V782M442.5 665V857M443.5 669V857M444.5 669V896M445.5 682V790M446.5 681V778M447.5 672V778M448.5 681V815M449.5 665V800M450.5 665V800M451.5 666V787M452.5 669V792M453.5 669V807M454.5 672V807M455.5 674V813M456.5 680V768M457.5 681V768M458.5 681V830M459.5 674V772M460.5 663V772M461.5 663V798M462.5 669V824M463.5 669V832M464.5 656V784M465.5 656V804M466.5 655V807M467.5 655V801M468.5 677V755M469.5 677V750M470.5 660V789M471.5 667V766M472.5 667V775M473.5 656V775M474.5 675V820M475.5 675V780M476.5 659V786M477.5 662V786M478.5 661V798M479.5 661V783M480.5 671V783M481.5 671V785M482.5 670V785M483.5 666V802M484.5 666V781M485.5 656V781M486.5 669V792M487.5 669V805M488.5 682V824M489.5 682V777M490.5 664V775M491.5 664V775M492.5 672V780M493.5 672V813M494.5 659V784M495.5 659V784M496.5 665V824M497.5 666V785M498.5 666V768M499.5 657V743M500.5 657V743M501.5 657V785M502.5 654V800M503.5 670V800M504.5 671V768M505.5 671V768M506.5 637V799M507.5 670V777M508.5 670V790M509.5 659V773M510.5 662V773M511.5 669V810M512.5 673V790M513.5 673V790M514.5 678V809M515.5 684V809M516.5 662V759M517.5 662V759M518.5 673V825M519.5 673V770M520.5 651V770M521.5 676V828M522.5 669V849M523.5 662V849M524.5 666V851M525.5 673V781M526.5 673V781M527.5 660V843M528.5 660V839M529.5 660V784M530.5 659V766M531.5 663V848M532.5 663V850M533.5 662V826M534.5 672V791M535.5 672V791M536.5 677V798M537.5 677V832M538.5 671V798M539.5 661V798M540.5 661V759M541.5 658V759M542.5 658V788M543.5 665V798M544.5 668V780M545.5 665V780M546.5 665V783M547.5 668V809M548.5 668V809M549.5 648V792M550.5 664V801M551.5 664V811M552.5 666V779M553.5 666V779M554.5 666V779M555.5 670V783M556.5 670V822M557.5 672V762M558.5 672V762M559.5 671V815M560.5 664V770M561.5 666V770M562.5 651V770M563.5 668V775M564.5 668V753M565.5 667V768M566.5 667V768M567.5 647V781M568.5 655V794M569.5 669V794M570.5 669V849M571.5 669V810M572.5 664V808M573.5 662V808M574.5 662V796M575.5 678V796M576.5 678V948M577.5 675V823M578.5 655V767M579.5 653V767M580.5 664V775M581.5 664V793M582.5 670V793M583.5 670V772M584.5 671V772M585.5 671V819M586.5 654V805M587.5 669V805M588.5 669V777M589.5 672V777M590.5 671V753M591.5 665V755M592.5 670V789M593.5 660V800M594.5 660V816M595.5 661V771M596.5 670V771M597.5 671V790M598.5 671V803M599.5 671V838M600.5 671V789M601.5 667V777M602.5 664V793M603.5 676V799M604.5 676V799M605.5 656V807M606.5 678V771M607.5 678V771M608.5 678V852M609.5 678V814M610.5 674V770M611.5 672V770M612.5 665V779M613.5 656V779M614.5 667V790M615.5 667V770M616.5 661V770M617.5 660V760M618.5 663V760M619.5 664V817M620.5 674V826M621.5 674V805M622.5 659V785M623.5 663V780M624.5 674V774M625.5 674V835M626.5 638V792M627.5 664V792M628.5 665V794M629.5 665V817M630.5 657V817M631.5 676V758M632.5 676V758M633.5 663V778M634.5 663V780M635.5 663V789M636.5 663V789M637.5 663V801M638.5 658V801M639.5 658V802M640.5 656V820M641.5 657V826M642.5 675V826M643.5 669V769M644.5 665V842M645.5 656V778M646.5 669V778M647.5 669V783M648.5 668V771M649.5 655V771M650.5 654V775M651.5 664V775M652.5 664V776M653.5 653V776M654.5 651V809M655.5 668V809M656.5 673V788M657.5 673V788M658.5 673V811M659.5 666V809M660.5 659V862M661.5 661V819M662.5 671V788M663.5 671V788M664.5 680V772M665.5 680V756M666.5 656V756M667.5 664V797M668.5 664V763M669.5 653V763M670.5 658V798M671.5 678V766M672.5 678V766M673.5 662V783M674.5 656V763M675.5 661V763M676.5 662V797M677.5 668V784M678.5 675V769M679.5 675V769M680.5 663V792M681.5 673V819M682.5 665V806M683.5 665V790M684.5 649V790M685.5 662V834M686.5 662V776M687.5 661V758M688.5 659V745M689.5 651V799M690.5 656V799M691.5 676V777M692.5 667V819M693.5 647V798M694.5 664V798M695.5 669V812M696.5 679V766M697.5 681V792M698.5 681V764M699.5 677V787M700.5 677V787M701.5 668V768M702.5 656V768M703.5 661V763M704.5 664V763M705.5 671V809M706.5 671V806M707.5 661V782M708.5 660V782M709.5 672V814M710.5 672V832M711.5 664V808M712.5 657V802M713.5 656V802M714.5 656V815M715.5 656V772M716.5 664V772M717.5 666V837M718.5 670V788M719.5 670V767M720.5 674V767M721.5 674V795M722.5 669V856M723.5 658V856M724.5 658V874M725.5 669V804M726.5 669V790M727.5 656V790M728.5 651V820M729.5 648V802M730.5 648V802M731.5 656V777M732.5 677V777M733.5 677V809M734.5 665V841M735.5 665V772M736.5 665V769M737.5 665V769M738.5 669V802M739.5 669V807M740.5 681V785M741.5 681V785M742.5 654V768M743.5 667V768M744.5 667V769M745.5 660V793M746.5 677V857M747.5 677V824M748.5 675V815M749.5 675V815M750.5 648V890M751.5 651V779M752.5 667V771M753.5 667V771M754.5 663V783M755.5 678V794M756.5 666V802M757.5 668V738M758.5 670V738M759.5 670V752M760.5 659V752M761.5 671V777M762.5 671V767M763.5 642V767M764.5 644V799M765.5 665V831M766.5 665V811M767.5 655V785M768.5 660V783M769.5 668V783M770.5 671V794M771.5 675V794M772.5 650V762M773.5 659V762M774.5 659V765M775.5 654V750M776.5 659V809M777.5 667V799M778.5 671V795M779.5 671V795M780.5 653V978M781.5 673V795M782.5 673V795M783.5 662V849M784.5 662V851M785.5 670V792M786.5 670V778M787.5 673V778M788.5 673V776M789.5 642V776M790.5 657V807M791.5 666V776M792.5 671V776M793.5 675V900M794.5 683V830M795.5 683V819M796.5 665V783M797.5 662V783M798.5 673V804M799.5 653V773M800.5 655V773M801.5 658V783M802.5 669V783M803.5 674V762M804.5 674V793M805.5 658V820M806.5 658V756M807.5 669V769M808.5 662V769M809.5 675V804M810.5 679V785M811.5 679V785M812.5 662V757M813.5 668V757M814.5 668V842M815.5 667V777M816.5 667V775M817.5 673V798M818.5 673V811M819.5 665V799M820.5 666V799M821.5 648V799M822.5 668V801M823.5 668V795M824.5 649V795M825.5 675V782M826.5 675V782M827.5 673V784M828.5 673V784M829.5 673V765M830.5 656V792M831.5 664V803M832.5 672V804M833.5 675V804M834.5 658V811M835.5 668V810M836.5 666V810M837.5 656V776M838.5 660V776M839.5 660V843M840.5 669V889M841.5 669V779M842.5 666V779M843.5 665V778M844.5 663V778M845.5 663V764M846.5 654V783M847.5 671V781M848.5 671V781M849.5 673V848M850.5 674V787M851.5 666V787M852.5 662V748M853.5 662V748M854.5 647V782M855.5 653V783M856.5 663V830M857.5 687V839M858.5 676V786M859.5 677V786M860.5 677V761M861.5 672V773M862.5 671V803M863.5 664V803M864.5 656V820M865.5 666V775M866.5 670V775M867.5 670V817M868.5 651V799M869.5 672V799M870.5 672V803M871.5 658V803M872.5 649V804M873.5 659V751M874.5 666V751M875.5 666V748M876.5 660V748M877.5 678V813M878.5 645V797M879.5 654V772M880.5 675V744M881.5 675V744M882.5 678V791M883.5 663V791M884.5 651V819M885.5 664V825M886.5 681V778M887.5 677V778M888.5 655V813M889.5 656V776M890.5 661V771M891.5 672V786M892.5 672V772M893.5 659V772M894.5 666V806M895.5 675V789M896.5 668V758M897.5 672V840M898.5 653V805M899.5 666V805M900.5 666V788M901.5 669V788M902.5 672V805M903.5 674V831M904.5 674V808M905.5 659V769M906.5 667V766M907.5 675V766M908.5 671V819M909.5 668V812M910.5 663V768M911.5 657V768M912.5 672V798M913.5 672V798M914.5 674V806M915.5 674V806M916.5 660V815M917.5 681V815M918.5 681V794M919.5 672V794M920.5 672V762M921.5 676V762M922.5 660V803M923.5 678V780M924.5 678V774M925.5 656V774M926.5 664V796M927.5 664V781M928.5 649V781M929.5 654V814M930.5 655V758M931.5 661V758M932.5 661V798M933.5 659V798M934.5 659V814M935.5 672V835M936.5 672V779M937.5 670V779M938.5 660V901M939.5 660V786M940.5 669V786M941.5 669V828M942.5 654V828M943.5 687V782M944.5 680V782M945.5 654V796M946.5 654V797M947.5 654V780M948.5 659V832M949.5 654V825M950.5 662V825M951.5 668V852M952.5 670V792M953.5 670V796M954.5 659V791M955.5 660V783M956.5 668V783M957.5 655V811M958.5 663V811M959.5 663V851M960.5 651V767M961.5 651V815M962.5 669V781M963.5 669V772M964.5 666V779M965.5 667V792M966.5 667V792M967.5 650V798M968.5 650V796M969.5 664V786M970.5 664V786M971.5 666V850M972.5 666V769M973.5 668V769M974.5 644V809M975.5 658V786M976.5 658V786M977.5 659V799M978.5 663V787M979.5 663V777M980.5 673V777M981.5 677V771M982.5 680V771M983.5 680V773M984.5 661V764M985.5 665V764M986.5 665V835M987.5 669V789M988.5 651V778M989.5 675V820M990.5 679V830M991.5 679V830M992.5 676V816M993.5 676V779M994.5 664V779M995.5 668V825M996.5 669V825M997.5 674V819M998.5 674V777M999.5 664V775M1000.5 657V775M1001.5 664V798M1002.5 666V770M1003.5 670V751M1004.5 653V759M1005.5 670V753M1006.5 668V827M1007.5 661V767M1008.5 648V767M1009.5 647V834M1010.5 676V866M1011.5 676V832M1012.5 672V779M1013.5 672V779M1014.5 670V772M1015.5 665V772M1016.5 683V762M1017.5 673V762M1018.5 662V763M1019.5 664V772M1020.5 664V760M1021.5 661V760M1022.5 663V769M1023.5 663V769M1024.5 660V791M1025.5 661V849M1026.5 661V808M1027.5 662V802M1028.5 663V795M1029.5 663V795M1030.5 659V816M1031.5 672V779M1032.5 653V779M1033.5 672V782M1034.5 672V782M1035.5 673V773M1036.5 673V848M1037.5 660V818M1038.5 658V818M1039.5 665V788M1040.5 665V788M1041.5 665V799M1042.5 648V841M1043.5 674V775M1044.5 674V788M1045.5 669V769M1046.5 677V752M1047.5 666V752M1048.5 668V791M1049.5 670V791M1050.5 676V817M1051.5 676V787M1052.5 659V790M1053.5 659V806M1054.5 661V841M1055.5 661V793M1056.5 659V762M1057.5 649V771M1058.5 663V775M1059.5 663V781M1060.5 649V781M1061.5 656V813M1062.5 659V816M1063.5 659V776M1064.5 662V771M1065.5 662V771M1066.5 649V750M1067.5 678V750M1068.5 671V823M1069.5 671V800M1070.5 650V794M1071.5 650V791M1072.5 647V791M1073.5 665V795M1074.5 665V798M1075.5 645V785M1076.5 660V779M1077.5 676V779M1078.5 676V787M1079.5 639V787M1080.5 657V859M1081.5 668V821M1082.5 669V821M1083.5 669V865M1084.5 649V831M1085.5 667V812M1086.5 667V771M1087.5 657V775M1088.5 659V775M1089.5 663V813M1090.5 663V813M1091.5 661V823M1092.5 661V846M1093.5 663V815M1094.5 665V811M1095.5 672V786M1096.5 672V771M1097.5 671V766M1098.5 671V766M1099.5 656V787M1100.5 675V787M1101.5 675V788M1102.5 665V788M1103.5 652V803M1104.5 653V803M1105.5 653V787M1106.5 669V787M1107.5 669V802M1108.5 668V809M1109.5 669V776M1110.5 682V776M1111.5 682V782M1112.5 674V854M1113.5 667V770M1114.5 667V770M1115.5 664V774M1116.5 664V766M1117.5 664V750M1118.5 677V813M1119.5 677V831M1120.5 667V831M1121.5 664V802M1122.5 667V788M1123.5 667V773M1124.5 659V773M1125.5 659V761M1126.5 666V761M1127.5 678V783M1128.5 661V837M1129.5 661V804M1130.5 655V769M1131.5 650V786M1132.5 666V852M1133.5 670V783M1134.5 670V783M1135.5 668V767M1136.5 668V767M1137.5 665V796M1138.5 665V796M1139.5 661V821M1140.5 659V883M1141.5 660V750M1142.5 660V750M1143.5 664V832M1144.5 662V825M1145.5 656V825M1146.5 656V814M1147.5 666V796M1148.5 666V796M1149.5 661V809M1150.5 661V863M1151.5 661V863M1152.5 654V795M1153.5 658V795M1154.5 658V833M1155.5 676V817M1156.5 675V785M1157.5 667V785M1158.5 672V802M1159.5 686V802M1160.5 667V767M1161.5 661V783M1162.5 668V795M1163.5 668V812M1164.5 658V830M1165.5 672V787M1166.5 672V770M1167.5 665V770M1168.5 655V772M1169.5 653V853M1170.5 664V830M1171.5 664V805M1172.5 655V805M1173.5 655V768M1174.5 657V768M1175.5 666V790M1176.5 666V821M1177.5 663V771M1178.5 663V771M1179.5 662V784M1180.5 662V786M1181.5 649V786M1182.5 649V777M1183.5 659V777M1184.5 659V789M1185.5 658V789M1186.5 684V817M1187.5 684V803M1188.5 656V803M1189.5 656V814M1190.5 650V839M1191.5 661V799M1192.5 661V799M1193.5 669V762M1194.5 666V762M1195.5 662V789M1196.5 662V789M1197.5 659V801M1198.5 657V781M1199.5 657V781M1200.5 664V749M1201.5 664V749M1202.5 662V756M1203.5 663V768M1204.5 663V768M1205.5 669V778M1206.5 671V778M1207.5 671V808M1208.5 669V780M1209.5 661V768M1210.5 661V768M1211.5 651V814M1212.5 673V814M1213.5 673V812M1214.5 650V800M1215.5 650V800M1216.5 680V861M1217.5 682V867M1218.5 682V805M1219.5 663V779M1220.5 665V779M1221.5 669V785M1222.5 670V761M1223.5 661V761M1224.5 642V763M1225.5 660V770M1226.5 660V784M1227.5 658V890M1228.5 658V784M1229.5 659V784M1230.5 671V797M1231.5 651V815M1232.5 646V804M1233.5 646V787M1234.5 665V916M1235.5 665V815M1236.5 641V815M1237.5 641V812M1238.5 658V773M1239.5 681V773M1240.5 681V782M1241.5 666V801M1242.5 664V807M1243.5 670V827M1244.5 670V809M1245.5 660V809M1246.5 668V819M1247.5 649V819M1248.5 663V781M1249.5 680V753M1250.5 656V823M1251.5 663V760M1252.5 664V760M1253.5 664V801M1254.5 665V797M1255.5 667V796M1256.5 667V796M1257.5 662V778M1258.5 675V778M1259.5 670V784M1260.5 662V865M1261.5 663V773M1262.5 679V835M1263.5 679V824M1264.5 672V763M1265.5 672V763M1266.5 656V765M1267.5 656V765M1268.5 661V793M1269.5 669V786M1270.5 675V782M1271.5 675V772M1272.5 662V798M1273.5 651V798M1274.5 657V767M1275.5 657V763M1276.5 651V763M1277.5 660V815M1278.5 660V847M1279.5 673V847M1280.5 669V830M1281.5 662V827M1282.5 665V759M1283.5 665V759M1284.5 670V800M1285.5 682V800M1286.5 682V841M1287.5 666V782M1288.5 666V782M1289.5 668V759M1290.5 668V746M1291.5 668V746M1292.5 682V799M1293.5 682V814M1294.5 664V814M1295.5 664V814M1296.5 663V816M1297.5 676V775M1298.5 676V772M1299.5 668V772M1300.5 664V812M1301.5 669V783M1302.5 669V783M1303.5 659V795M1304.5 659V735M1305.5 653V735M1306.5 673V786M1307.5 672V765M1308.5 670V765M1309.5 662V787M1310.5 643V836M1311.5 663V781M1312.5 653V761M1313.5 678V761M1314.5 678V767M1315.5 654V767M1316.5 654V774M1317.5 668V801M1318.5 668V785M1319.5 659V746M1320.5 657V829M1321.5 657V829M1322.5 654V784M1323.5 654V784M1324.5 646V819M1325.5 663V800M1326.5 666V800M1327.5 666V800M1328.5 654V793M1329.5 653V793M1330.5 656V787M1331.5 656V786M1332.5 660V786M1333.5 660V782M1334.5 658V768M1335.5 658V768M1336.5 666V756M1337.5 666V756M1338.5 664V806M1339.5 662V790M1340.5 662V782M1341.5 684V782M1342.5 684V798M1343.5 656V798M1344.5 674V812M1345.5 674V822M1346.5 664V806M1347.5 664V803M1348.5 671V803M1349.5 671V763M1350.5 658V763M1351.5 675V790M1352.5 651V811M1353.5 651V769M1354.5 683V769M1355.5 648V758M1356.5 648V758M1357.5 665V804M1358.5 665V808M1359.5 662V808M1360.5 678V770M1361.5 678V748M1362.5 668V835M1363.5 661V818M1364.5 665V785M1365.5 665V785M1366.5 665V798M1367.5 680V798M1368.5 650V818M1369.5 666V785M1370.5 666V785M1371.5 664V795M1372.5 665V760M1373.5 667V776M1374.5 689V815M1375.5 665V819M1376.5 670V819M1377.5 670V792M1378.5 670V759M1379.5 674V759M1380.5 674V788M1381.5 675V779M1382.5 675V779M1383.5 675V790M1384.5 650V834M1385.5 650V834M1386.5 656V882M1387.5 663V810M1388.5 663V780M1389.5 661V780M1390.5 661V820M1391.5 663V806M1392.5 680V806M1393.5 680V804M1394.5 658V792M1395.5 666V778M1396.5 658V778M1397.5 654V786M1398.5 679V786M1399.5 679V851M1400.5 665V804M1401.5 654V804M1402.5 672V797M1403.5 672V795M1404.5 661V772M1405.5 666V772M1406.5 666V797M1407.5 665V766M1408.5 665V766M1409.5 662V795M1410.5 678V795M1411.5 678V816M1412.5 663V767M1413.5 665V767M1414.5 644V751M1415.5 666V744M1416.5 667V775M1417.5 666V782M1418.5 646V782M1419.5 665V794M1420.5 665V904M1421.5 663V769M1422.5 663V807M1423.5 659V812M1424.5 659V826M1425.5 680V820M1426.5 680V820M1427.5 667V761M1428.5 663V761M1429.5 659V827M1430.5 685V827M1431.5 685V781M1432.5 670V781M1433.5 668V804M1434.5 668V827M1435.5 661V767M1436.5 661V767M1437.5 672V832M1438.5 672V849M1439.5 665V774M1440.5 662V819M1441.5 662V807M1442.5 675V802M1443.5 675V802M1444.5 662V823M1445.5 669V786M1446.5 669V786M1447.5 671V818M1448.5 667V781M1449.5 667V781M1450.5 656V801M1451.5 671V801M1452.5 675V848M1453.5 675V763M1454.5 661V763M1455.5 661V771M1456.5 667V773M1457.5 667V807M1458.5 661V807M1459.5 661V807M1460.5 655V828M1461.5 653V802M1462.5 668V802M1463.5 668V814M1464.5 663V790M1465.5 663V790M1466.5 647V789M1467.5 659V789M1468.5 671V791M1469.5 671V791M1470.5 650V809M1471.5 661V801M1472.5 661V765M1473.5 656V765M1474.5 663V780M1475.5 663V779M1476.5 673V779M1477.5 671V796M1478.5 668V770M1479.5 673V770M1480.5 673V812M1481.5 662V781M1482.5 654V757M1483.5 648V749M1484.5 673V749M1485.5 658V814M1486.5 662V802M1487.5 662V802M1488.5 671V791M1489.5 671V791M1490.5 661V804M1491.5 655V804M1492.5 667V838M1493.5 672V786M1494.5 673V770M1495.5 670V808M1496.5 664V762M1497.5 658V816M1498.5 659V816M1499.5 659V799M1500.5 661V763M1501.5 673V763M1502.5 673V798M1503.5 659V808M1504.5 647V774M1505.5 647V774M1506.5 673V783M1507.5 663V767M1508.5 663V767M1509.5 652V763M1510.5 661V775M1511.5 661V775M1512.5 659V795M1513.5 663V782M1514.5 663V773M1515.5 671V773M1516.5 671V786M1517.5 669V786M1518.5 685V822M1519.5 685V839M1520.5 653V763M1521.5 653V763M1522.5 663V782M1523.5 678V801M1524.5 678V836M1525.5 665V800M1526.5 653V802M1527.5 682V808M1528.5 682V755M1529.5 670V755M1530.5 659V760M1531.5 659V760M1532.5 661V782M1533.5 661V817M1534.5 661V817M1535.5 654V778M1536.5 654V766M1537.5 654V766M1538.5 654V781M1539.5 681V781M1540.5 681V769M1541.5 669V798M1542.5 665V798M1543.5 665V798M1544.5 661V822M1545.5 664V827M1546.5 670V805M1547.5 653V771M1548.5 674V771M1549.5 674V788M1550.5 673V835M1551.5 672V818M1552.5 672V818M1553.5 655V787M1554.5 670V787M1555.5 671V798M1556.5 670V792M1557.5 657V792M1558.5 653V807M1559.5 653V770M1560.5 646V770M1561.5 657V810M1562.5 662V766M1563.5 662V766M1564.5 653V773M1565.5 670V773M1566.5 670V781M1567.5 669V759M1568.5 669V759M1569.5 669V779M1570.5 668V787M1571.5 659V778M1572.5 659V778M1573.5 668V778M1574.5 668V803M1575.5 663V803M1576.5 663V812M1577.5 661V882M1578.5 656V786M1579.5 656V786M1580.5 664V759M1581.5 655V754M1582.5 655V792M1583.5 658V792M1584.5 668V794M1585.5 668V794M1586.5 657V817M1587.5 661V807M1588.5 668V807M1589.5 664V799M1590.5 660V799M1591.5 661V848M1592.5 661V876M1593.5 667V819M1594.5 667V849M1595.5 668V770M1596.5 674V794M1597.5 674V794M1598.5 669V835M1599.5 669V811M1600.5 666V811M1601.5 650V760M1602.5 673V760M1603.5 673V775M1604.5 661V775M1605.5 666V775M1606.5 667V778M1607.5 667V778M1608.5 665V781M1609.5 665V841M1610.5 656V841M1611.5 656V815M1612.5 648V796M1613.5 653V796M1614.5 661V775M1615.5 661V775M1616.5 666V843M1617.5 666V807M1618.5 660V801M1619.5 667V817M1620.5 661V788M1621.5 647V788M1622.5 653V766M1623.5 657V766M1624.5 657V787M1625.5 656V787M1626.5 656V800M1627.5 671V795M1628.5 662V769M1629.5 675V792M1630.5 675V778M1631.5 668V778M1632.5 666V794M1633.5 670V794M1634.5 678V753M1635.5 677V785M1636.5 654V777M1637.5 673V764M1638.5 673V764M1639.5 664V788M1640.5 668V799M1641.5 653V778M1642.5 655V768M1643.5 671V768M1644.5 671V810M1645.5 674V791M1646.5 674V797M1647.5 666V791M1648.5 666V816M1649.5 664V770M1650.5 664V770M1651.5 677V764M1652.5 677V764M1653.5 682V795M1654.5 682V780M1655.5 668V780M1656.5 668V738M1657.5 661V746M1658.5 667V778M1659.5 667V811M1660.5 662V790M1661.5 662V790M1662.5 658V798M1663.5 657V778M1664.5 660V778M1665.5 673V832M1666.5 673V775M1667.5 670V754M1668.5 669V761M1669.5 661V801M1670.5 670V801M1671.5 671V766M1672.5 671V766M1673.5 662V775M1674.5 676V799M1675.5 676V803M1676.5 671V803M1677.5 673V811M1678.5 673V821M1679.5 673V796M1680.5 673V766M1681.5 664V775M1682.5 666V775M1683.5 664V812M1684.5 651V821M1685.5 655V783M1686.5 655V783M1687.5 653V771M1688.5 653V770M1689.5 678V794M1690.5 683V805M1691.5 667V805M1692.5 669V768M1693.5 679V768M1694.5 679V780M1695.5 672V780M1696.5 664V786M1697.5 664V780M1698.5 676V782M1699.5 676V761M1700.5 665V761M1701.5 659V769M1702.5 666V779M1703.5 666V778M1704.5 664V778M1705.5 664V775M1706.5 660V810M1707.5 670V797M1708.5 673V797M1709.5 673V800M1710.5 675V817M1711.5 678V802M1712.5 678V801M1713.5 672V747M1714.5 657V804M1715.5 649V804M1716.5 660V808M1717.5 661V793M1718.5 664V793M1719.5 664V828M1720.5 654V773M1721.5 663V836M1722.5 663V794M1723.5 669V794M1724.5 667V813M1725.5 663V810M1726.5 664V810M1727.5 685V794M1728.5 645V794M1729.5 649V794M1730.5 671V777M1731.5 662V774M1732.5 662V807M1733.5 661V807M1734.5 652V795M1735.5 671V795M1736.5 684V834M1737.5 684V824M1738.5 651V824M1739.5 661V850M1740.5 661V773M1741.5 661V769M1742.5 667V769M1743.5 667V794M1744.5 662V781M1745.5 658V781M1746.5 649V792M1747.5 627V802M1748.5 666V812M1749.5 666V788M1750.5 667V769M1751.5 667V769M1752.5 669V798M1753.5 669V763M1754.5 661V763M1755.5 656V831M1756.5 679V831M1757.5 679V856M1758.5 647V792M1759.5 655V792M1760.5 665V792M1761.5 661V799M1762.5 661V835M1763.5 660V795M1764.5 647V752M1765.5 647V752M1766.5 659V788M1767.5 668V811M1768.5 668V811M1769.5 666V824M1770.5 663V778M1771.5 669V778M1772.5 669V795M1773.5 669V772M1774.5 669V745M1775.5 660V745M1776.5 670V802M1777.5 670V808M1778.5 656V820M1779.5 668V831M1780.5 662V781M1781.5 677V781M1782.5 677V789M1783.5 665V798M1784.5 665V767M1785.5 660V767M1786.5 660V819M1787.5 664V751M1788.5 668V751M1789.5 656V792M1790.5 678V800M1791.5 678V800M1792.5 670V793M1793.5 670V793M1794.5 650V816M1795.5 679V798M1796.5 679V798M1797.5 673V815M1798.5 673V798M1799.5 676V798M1800.5 676V786M1801.5 666V786M1802.5 672V819M1803.5 677V798M1804.5 677V798M1805.5 673V769M1806.5 673V763M1807.5 656V772M1808.5 684V772M1809.5 684V786M1810.5 658V786M1811.5 669V830M1812.5 669V843M1813.5 678V797M1814.5 678V797M1815.5 665V789M1816.5 665V766M1817.5 670V766M1818.5 670V787M1819.5 669V750M1820.5 669V757M1821.5 667V765M1822.5 660V785M1823.5 660V785M1824.5 663V777M1825.5 666V864M1826.5 666V781M1827.5 657V781M1828.5 672V837M1829.5 654V846M1830.5 666V765M1831.5 666V818M1832.5 662V815M1833.5 662V784M1834.5 656V784M1835.5 656V806" stroke="#8ae234" stroke-width="1" fill="none"/><path d="M319.5 552V642.0M325.5 131V414M328.5 536V647.0M331.5 346.5V451M337.5 316.7V340M343.5 362.8V489M350.5 483V660.0M356.5 452V642.0M362.5 562V652.0M368.5 539V639.0M374.5 611V662.0M386.5 629V658.0" stroke="#4a7c1c" stroke-width="1" fill="none"/><path d="M325.5 414V645.0M331.5 451V650.0M337.5 340V663.0M343.5 489V647.0" stroke="#8ae234" stroke-width="1" fill="none"/><path d="M325.3 124.5L328.7 131.0H321.9ZM338.0 310.2L341.4 316.7H334.6ZM331.5 340.0L334.9 346.5H328.1ZM344.0 356.3L347.4 362.8H340.6ZM356.0 445.5L359.4 452.0H352.6Z" fill="#ff00ff"/><g font-family="Liberation Sans" font-size="11" fill="#e000e0"><text x="318.7" y="119.4">P0</text><text x="331.4" y="305.1">P1</text><text x="324.9" y="334.9">P2</text><text x="337.4" y="351.2">P3</text><text x="349.4" y="440.4">P4</text></g></g><rect x="244" y="1022.5" width="1668" height="9.5" fill="#d2d2d2"/><rect x="244" y="1022.5" width="1668" height="1.2" fill="#e6e6e6"/><rect x="246" y="1024.8" width="1663.5" height="4.8" rx="2.4" fill="#7e8384"/><rect x="1912" y="84" width="6" height="938.5" fill="#d2d2d2"/><rect x="1912" y="84" width="1" height="938.5" fill="#e6e6e6"/><rect x="1913.2" y="86.3" width="6" height="933.7" rx="2.4" fill="#7e8384"/><rect x="1912" y="1022.5" width="6" height="9.5" fill="#f8f8f8"/></svg>
</body></html>
